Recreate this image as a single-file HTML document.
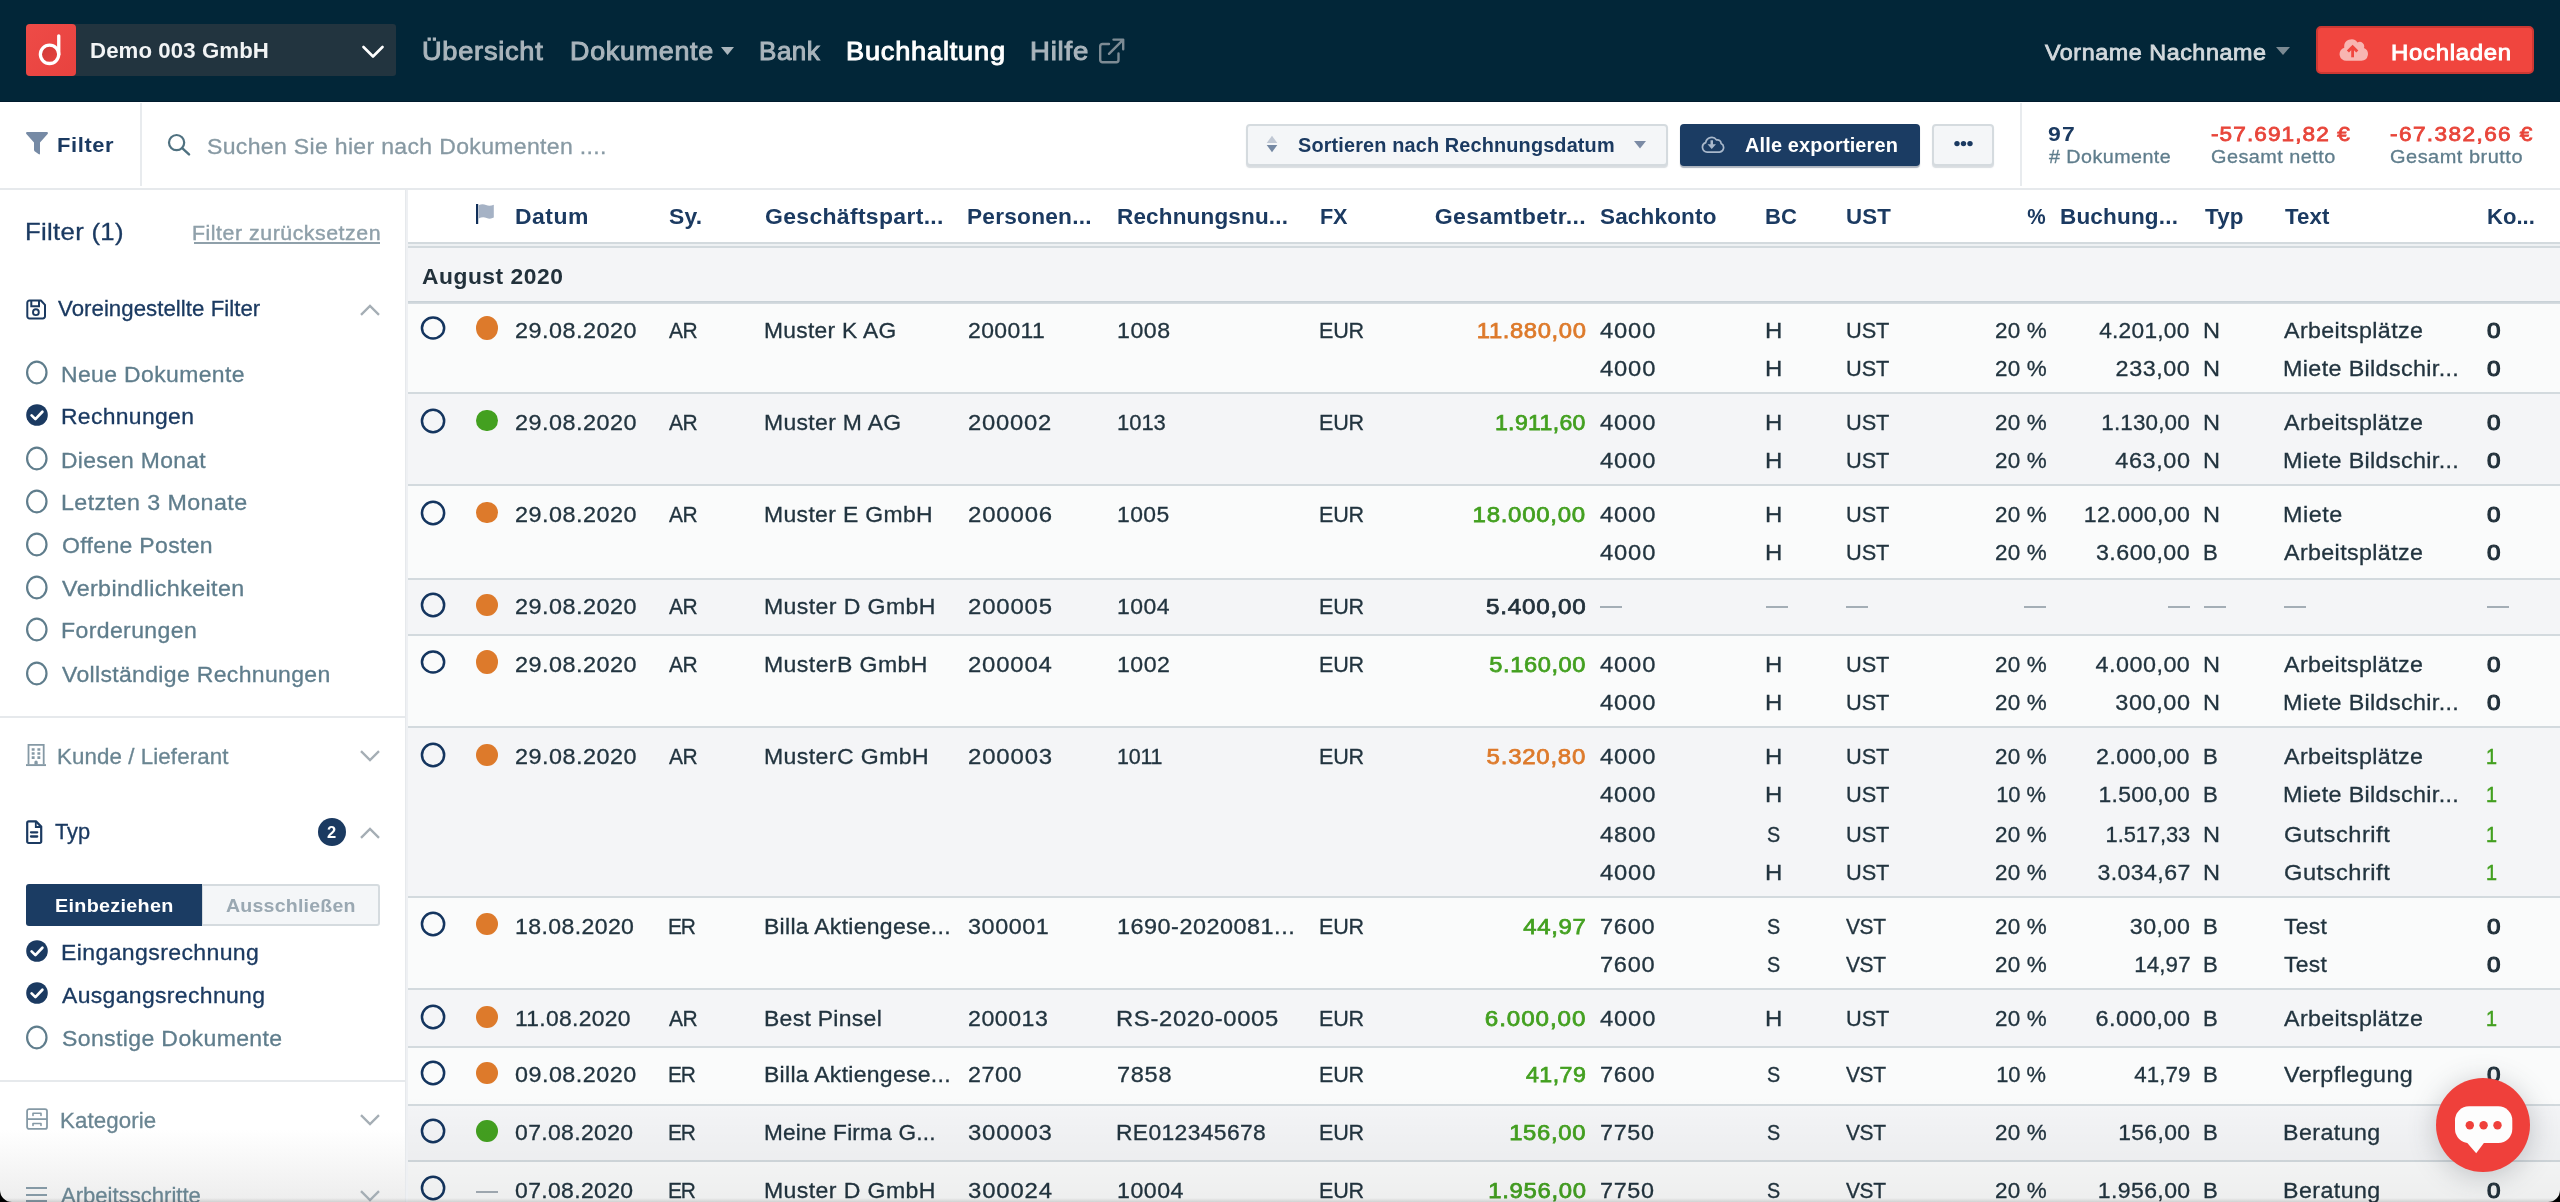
<!DOCTYPE html>
<html lang="de"><head><meta charset="utf-8"><title>Buchhaltung</title><style>
html,body{margin:0;padding:0;background:#fff;overflow:hidden;}
#p{will-change:transform;position:relative;width:2560px;height:1202px;overflow:hidden;background:#fff;font-family:"Liberation Sans",sans-serif;}
.t{position:absolute;white-space:nowrap;line-height:1;font-family:"Liberation Sans",sans-serif;}
.b{position:absolute;box-sizing:border-box;display:block;}
</style></head><body><div id="p">
<div class="b" style="left:0px;top:0px;width:2560px;height:102px;background:#022638;border-bottom:1px solid #011b2e;"></div>
<div class="b" style="left:26px;top:24px;width:370px;height:52px;background:#22343f;border-radius:3px;"></div>
<div class="b" style="left:26px;top:24px;width:50px;height:52px;background:linear-gradient(135deg,#ee4b47,#e8423f);border-radius:4px;"></div>
<svg class="b" style="left:26px;top:24px;" width="50" height="52" viewBox="0 0 50 52"><defs><linearGradient id="lg" x1="0" y1="0" x2="1" y2="1"><stop offset="0" stop-color="#cf3a38"/><stop offset="1" stop-color="#e8433f"/></linearGradient></defs><circle cx="23.55" cy="30.3" r="9.2" fill="url(#lg)" stroke="#fff" stroke-width="3.3"/><path d="M32.75 30.3V11.8" stroke="#fff" stroke-width="3.3" stroke-linecap="round" fill="none"/></svg>
<span class="t" id="t1" style="top:40.28px;font-size:22px;color:#f2f4f5;font-weight:700;letter-spacing:0.094px;left:90.09px;transform:scaleX(1.0098);transform-origin:0 0;">Demo 003 GmbH</span>
<svg class="b" style="left:362px;top:45px;" width="22" height="14" viewBox="0 0 22 14"><path d="M1.5 2L11 11.5L20.5 2" fill="none" stroke="#fff" stroke-width="2.6" stroke-linecap="round" stroke-linejoin="round"/></svg>
<span class="t" id="t2" style="top:39.24px;font-size:25px;color:#aab5bc;letter-spacing:0.688px;-webkit-text-stroke:0.95px #aab5bc;left:422.04px;transform:scaleX(1.0867);transform-origin:0 0;">Übersicht</span>
<span class="t" id="t3" style="top:39.24px;font-size:25px;color:#aab5bc;letter-spacing:0.706px;-webkit-text-stroke:0.95px #aab5bc;left:569.55px;transform:scaleX(1.0729);transform-origin:0 0;">Dokumente</span>
<svg class="b" style="left:721px;top:47px;" width="13" height="8" viewBox="0 0 13 8"><path d="M0 0H13L6.5 8Z" fill="#aab5bc"/></svg>
<span class="t" id="t4" style="top:39.24px;font-size:25px;color:#aab5bc;letter-spacing:0.489px;-webkit-text-stroke:0.95px #aab5bc;left:758.62px;transform:scaleX(1.0416);transform-origin:0 0;">Bank</span>
<span class="t" id="t5" style="top:39.24px;font-size:25px;color:#ffffff;letter-spacing:0.725px;-webkit-text-stroke:0.95px #ffffff;left:846.03px;transform:scaleX(1.0873);transform-origin:0 0;">Buchhaltung</span>
<span class="t" id="t6" style="top:39.24px;font-size:25px;color:#aab5bc;letter-spacing:0.750px;-webkit-text-stroke:0.95px #aab5bc;left:1029.50px;transform:scaleX(1.1000);transform-origin:0 0;">Hilfe</span>
<svg class="b" style="left:1098px;top:38px;" width="27" height="27" viewBox="0 0 27 27"><path d="M20.5 15.5V22a2.2 2.2 0 0 1-2.2 2.2H4.4A2.2 2.2 0 0 1 2.2 22V8.2A2.2 2.2 0 0 1 4.4 6H11" fill="none" stroke="#7d8b94" stroke-width="2.4" stroke-linecap="round"/><path d="M15.5 1.6H25.2V11.3M25 1.8L11 15.8" fill="none" stroke="#7d8b94" stroke-width="2.4" stroke-linecap="round" stroke-linejoin="round"/></svg>
<span class="t" id="t7" style="top:41.78px;font-size:22px;color:#d3d9dd;letter-spacing:0.510px;-webkit-text-stroke:0.8px #d3d9dd;left:2045.20px;transform:scaleX(1.0610);transform-origin:0 0;">Vorname Nachname</span>
<svg class="b" style="left:2276px;top:47px;" width="14" height="8" viewBox="0 0 14 8"><path d="M0 0H14L7 8Z" fill="#7b8a93"/></svg>
<div class="b" style="left:2316px;top:26px;width:218px;height:48px;background:#f0453e;border:2px solid #cd3833;border-radius:5px;"></div>
<svg class="b" style="left:2339px;top:38px;" width="30" height="24" viewBox="0 0 30 24"><path d="M7.5 22.8A6.7 6.7 0 0 1 5.3 9.7A7.3 7.3 0 0 1 18.5 4.4A4.5 4.5 0 0 1 24.9 9.95A6.7 6.7 0 0 1 22.5 22.8Z" fill="#f8b5b1"/><path d="M13.6 19.3V9.6" fill="none" stroke="#f0453e" stroke-width="2.8"/><path d="M8.9 13.5L13.6 8.8L18.3 13.5" fill="none" stroke="#f0453e" stroke-width="3" stroke-linejoin="miter"/></svg>
<span class="t" id="t8" style="top:41.78px;font-size:22px;color:#fff;letter-spacing:0.670px;-webkit-text-stroke:0.9px #fff;left:2390.75px;transform:scaleX(1.0855);transform-origin:0 0;">Hochladen</span>
<div class="b" style="left:0px;top:102px;width:2560px;height:88px;background:#fff;border-bottom:2px solid #e6e9ec;"></div>
<div class="b" style="left:140px;top:103px;width:2px;height:83px;background:#e8ebee;"></div>
<div class="b" style="left:2020px;top:103px;width:2px;height:83px;background:#e8ebee;"></div>
<svg class="b" style="left:26px;top:132px;" width="22" height="23" viewBox="0 0 22 23"><path d="M1.2 0H20.8Q22.6 0.2 21.6 1.9L14 10.6V21.4Q13.9 23 12.5 22.1L8.6 19.2Q8 18.7 8 17.8V10.6L0.4 1.9Q-0.6 0.2 1.2 0Z" fill="#768aa5"/></svg>
<span class="t" id="t9" style="top:135.17px;font-size:20px;color:#1b3a61;font-weight:700;letter-spacing:0.554px;left:57.27px;transform:scaleX(1.0962);transform-origin:0 0;">Filter</span>
<svg class="b" style="left:167px;top:133px;" width="25" height="23" viewBox="0 0 25 23"><circle cx="9.6" cy="9.6" r="7.6" fill="none" stroke="#4f7180" stroke-width="2.2"/><path d="M15.2 15.2L22 21.4" stroke="#4f7180" stroke-width="2.4" stroke-linecap="round"/></svg>
<span class="t" id="t10" style="top:135.58px;font-size:22px;color:#8799a3;letter-spacing:0.313px;-webkit-text-stroke:0.3px #8799a3;left:206.76px;transform:scaleX(1.0468);transform-origin:0 0;">Suchen Sie hier nach Dokumenten ....</span>
<div class="b" style="left:1246px;top:124px;width:422px;height:42px;background:#f4f6f8;border:2px solid #d5dbdf;border-radius:4px;box-shadow:0 2px 1px rgba(170,180,188,.45);"></div>
<svg class="b" style="left:1266px;top:135px;" width="12" height="18" viewBox="0 0 12 18"><path d="M6 0.8L11.3 7.9H0.7Z" fill="#c0c8d4"/><path d="M0.7 9.9H11.3L6 17.3Z" fill="#7488a3"/></svg>
<span class="t" id="t11" style="top:136.39px;font-size:19.5px;color:#1b3a61;font-weight:700;letter-spacing:0.139px;left:1298.19px;transform:scaleX(1.0195);transform-origin:0 0;">Sortieren nach Rechnungsdatum</span>
<svg class="b" style="left:1634px;top:141px;" width="12" height="8" viewBox="0 0 12 8"><path d="M0 0H12L6 7.6Z" fill="#7b8ba5"/></svg>
<div class="b" style="left:1680px;top:124px;width:240px;height:42px;background:#1b3c63;border-radius:4px;box-shadow:0 2px 1px rgba(20,40,70,.35);"></div>
<svg class="b" style="left:1701px;top:134px;" width="25" height="20" viewBox="0 0 25 20"><path d="M6.2 18.1A4.9 4.9 0 0 1 4.7 8.6A6.1 6.1 0 0 1 15.6 5.9A3.7 3.7 0 0 1 20.1 9.6A4.5 4.5 0 0 1 18.6 18.1Z" fill="none" stroke="#a9b8cb" stroke-width="1.7" stroke-linejoin="round"/><path d="M9.5 6.2H12V10.3H15L10.75 15.1L6.5 10.3H9.5Z" fill="#a9b8cb"/></svg>
<span class="t" id="t12" style="top:136.39px;font-size:19.5px;color:#fff;font-weight:700;letter-spacing:0.144px;left:1745.29px;transform:scaleX(1.0227);transform-origin:0 0;">Alle exportieren</span>
<div class="b" style="left:1932px;top:124px;width:62px;height:42px;background:#f4f6f8;border:2px solid #d5dbdf;border-radius:4px;box-shadow:0 2px 1px rgba(170,180,188,.45);"></div>
<svg class="b" style="left:1954px;top:140px;" width="19" height="7" viewBox="0 0 19 7"><circle cx="3" cy="3.6" r="2.7" fill="#1b3a61"/><circle cx="9.5" cy="3.6" r="2.7" fill="#1b3a61"/><circle cx="16" cy="3.6" r="2.7" fill="#1b3a61"/></svg>
<span class="t" id="t13" style="top:123.75px;font-size:20.5px;color:#1b3a61;font-weight:700;letter-spacing:1.031px;left:2047.92px;transform:scaleX(1.1200);transform-origin:0 0;">97</span>
<span class="t" id="t14" style="top:148.04px;font-size:18.5px;color:#5f7d8c;letter-spacing:0.438px;-webkit-text-stroke:0.3px #5f7d8c;left:2048.70px;transform:scaleX(1.0640);transform-origin:0 0;"># Dokumente</span>
<span class="t" id="t15" style="top:123.75px;font-size:20.5px;color:#e8453a;letter-spacing:0.998px;-webkit-text-stroke:0.8px #e8453a;left:2210.71px;transform:scaleX(1.1000);transform-origin:0 0;">-57.691,82 €</span>
<span class="t" id="t16" style="top:148.04px;font-size:18.5px;color:#5f7d8c;letter-spacing:0.446px;-webkit-text-stroke:0.3px #5f7d8c;left:2210.74px;transform:scaleX(1.0720);transform-origin:0 0;">Gesamt netto</span>
<span class="t" id="t17" style="top:123.75px;font-size:20.5px;color:#e8453a;letter-spacing:1.296px;-webkit-text-stroke:0.8px #e8453a;left:2390.21px;transform:scaleX(1.1000);transform-origin:0 0;">-67.382,66 €</span>
<span class="t" id="t18" style="top:148.04px;font-size:18.5px;color:#5f7d8c;letter-spacing:0.469px;-webkit-text-stroke:0.3px #5f7d8c;left:2390.23px;transform:scaleX(1.0787);transform-origin:0 0;">Gesamt brutto</span>
<div class="b" style="left:0px;top:190px;width:405px;height:1012px;background:#fff;"></div>
<div class="b" style="left:405px;top:190px;width:3px;height:1012px;background:linear-gradient(to right,#e6e9ec 0,#e6e9ec 34%,#eef0f3 34%);"></div>
<div class="b" style="left:0px;top:1130px;width:405px;height:72px;background:linear-gradient(to bottom,rgba(240,240,240,0),rgba(237,237,237,1));"></div>
<span class="t" id="t19" style="top:220.16px;font-size:24.5px;color:#1b3a61;letter-spacing:0.304px;-webkit-text-stroke:0.3px #1b3a61;left:24.60px;transform:scaleX(1.0490);transform-origin:0 0;">Filter (1)</span>
<span class="t" id="t20" style="top:224.39px;font-size:19.5px;color:#8fa0aa;letter-spacing:0.501px;-webkit-text-stroke:0.4px #8fa0aa;left:192.45px;transform:scaleX(1.0918);transform-origin:0 0;">Filter zurücksetzen</span>
<div class="b" style="left:193.5px;top:242px;width:186.5px;height:2px;background:#8fa0aa;"></div>
<svg class="b" style="left:26px;top:298.5px;" width="21" height="21" viewBox="0 0 21 21"><path d="M3.5 1.5H14.9L19 5.9V17.2A2.2 2.2 0 0 1 16.8 19.4H3.5A2.2 2.2 0 0 1 1.3 17.2V3.7A2.2 2.2 0 0 1 3.5 1.5Z" fill="none" stroke="#1b3a61" stroke-width="2" stroke-linejoin="round"/><path d="M5.3 1.6V7.2H13V1.6" fill="none" stroke="#1b3a61" stroke-width="2"/><circle cx="9.9" cy="13.2" r="2.9" fill="none" stroke="#1b3a61" stroke-width="1.9"/></svg>
<span class="t" id="t21" style="top:298.28px;font-size:22px;color:#1b3a61;letter-spacing:0.055px;-webkit-text-stroke:0.3px #1b3a61;left:57.70px;transform:scaleX(1.0088);transform-origin:0 0;">Voreingestellte Filter</span>
<svg class="b" style="left:360px;top:303.5px;" width="20" height="12" viewBox="0 0 20 12"><path d="M1 10.9L10 1.9L19 10.9" fill="none" stroke="#a5aeb5" stroke-width="2.3" stroke-linecap="butt" stroke-linejoin="miter"/></svg>
<svg class="b" style="left:26px;top:360px;" width="22" height="25" viewBox="0 0 22 25"><ellipse cx="10.8" cy="12.5" rx="9.7" ry="10.8" fill="none" stroke="#5f7d8c" stroke-width="2.2"/></svg>
<span class="t" id="t22" style="top:364.28px;font-size:22px;color:#5f7d8c;letter-spacing:0.358px;-webkit-text-stroke:0.3px #5f7d8c;left:61.12px;transform:scaleX(1.0432);transform-origin:0 0;">Neue Dokumente</span>
<svg class="b" style="left:26px;top:403.95px;" width="22" height="22" viewBox="0 0 22 22"><circle cx="11" cy="11" r="10.8" fill="#1b3a61"/><path d="M5.6 11.4L9.4 15.1L16.4 7.7" fill="none" stroke="#fff" stroke-width="2.7" stroke-linecap="round" stroke-linejoin="round"/></svg>
<span class="t" id="t23" style="top:406.03px;font-size:22px;color:#1b3a61;letter-spacing:0.341px;-webkit-text-stroke:0.3px #1b3a61;left:61.13px;transform:scaleX(1.0393);transform-origin:0 0;">Rechnungen</span>
<svg class="b" style="left:26px;top:445.5px;" width="22" height="25" viewBox="0 0 22 25"><ellipse cx="10.8" cy="12.5" rx="9.7" ry="10.8" fill="none" stroke="#5f7d8c" stroke-width="2.2"/></svg>
<span class="t" id="t24" style="top:449.78px;font-size:22px;color:#5f7d8c;letter-spacing:0.310px;-webkit-text-stroke:0.3px #5f7d8c;left:61.13px;transform:scaleX(1.0398);transform-origin:0 0;">Diesen Monat</span>
<svg class="b" style="left:26px;top:488.75px;" width="22" height="25" viewBox="0 0 22 25"><ellipse cx="10.8" cy="12.5" rx="9.7" ry="10.8" fill="none" stroke="#5f7d8c" stroke-width="2.2"/></svg>
<span class="t" id="t25" style="top:492.28px;font-size:22px;color:#5f7d8c;letter-spacing:0.402px;-webkit-text-stroke:0.3px #5f7d8c;left:61.10px;transform:scaleX(1.0571);transform-origin:0 0;">Letzten 3 Monate</span>
<svg class="b" style="left:26px;top:531.75px;" width="22" height="25" viewBox="0 0 22 25"><ellipse cx="10.8" cy="12.5" rx="9.7" ry="10.8" fill="none" stroke="#5f7d8c" stroke-width="2.2"/></svg>
<span class="t" id="t26" style="top:534.78px;font-size:22px;color:#5f7d8c;letter-spacing:0.328px;-webkit-text-stroke:0.3px #5f7d8c;left:61.96px;transform:scaleX(1.0447);transform-origin:0 0;">Offene Posten</span>
<svg class="b" style="left:26px;top:575px;" width="22" height="25" viewBox="0 0 22 25"><ellipse cx="10.8" cy="12.5" rx="9.7" ry="10.8" fill="none" stroke="#5f7d8c" stroke-width="2.2"/></svg>
<span class="t" id="t27" style="top:578.28px;font-size:22px;color:#5f7d8c;letter-spacing:0.374px;-webkit-text-stroke:0.3px #5f7d8c;left:62.00px;transform:scaleX(1.0575);transform-origin:0 0;">Verbindlichkeiten</span>
<svg class="b" style="left:26px;top:617px;" width="22" height="25" viewBox="0 0 22 25"><ellipse cx="10.8" cy="12.5" rx="9.7" ry="10.8" fill="none" stroke="#5f7d8c" stroke-width="2.2"/></svg>
<span class="t" id="t28" style="top:620.28px;font-size:22px;color:#5f7d8c;letter-spacing:0.369px;-webkit-text-stroke:0.3px #5f7d8c;left:61.12px;transform:scaleX(1.0472);transform-origin:0 0;">Forderungen</span>
<svg class="b" style="left:26px;top:660.5px;" width="22" height="25" viewBox="0 0 22 25"><ellipse cx="10.8" cy="12.5" rx="9.7" ry="10.8" fill="none" stroke="#5f7d8c" stroke-width="2.2"/></svg>
<span class="t" id="t29" style="top:664.28px;font-size:22px;color:#5f7d8c;letter-spacing:0.324px;-webkit-text-stroke:0.3px #5f7d8c;left:62.00px;transform:scaleX(1.0450);transform-origin:0 0;">Vollständige Rechnungen</span>
<div class="b" style="left:0px;top:716px;width:405px;height:2px;background:#e6e9ec;"></div>
<svg class="b" style="left:26px;top:743px;" width="21" height="24" viewBox="0 0 21 24"><path d="M2.5 21.2V1.9H17.7V21.2" fill="none" stroke="#8599a5" stroke-width="1.8"/><path d="M0 22.1H20" stroke="#8599a5" stroke-width="1.9"/><path d="M7.15 5.2V7.8M12.85 5.2V7.8M7.15 9.2V11.8M12.85 9.2V11.8M7.15 13.2V16M12.85 13.2V16" stroke="#8599a5" stroke-width="2.9"/><path d="M8.4 21.4V19.1A1.65 1.65 0 0 1 11.7 19.1V21.4Z" fill="#8599a5"/></svg>
<span class="t" id="t30" style="top:745.88px;font-size:22px;color:#6a8592;letter-spacing:0.092px;-webkit-text-stroke:0.3px #6a8592;left:56.88px;transform:scaleX(1.0136);transform-origin:0 0;">Kunde / Lieferant</span>
<svg class="b" style="left:360px;top:750px;" width="20" height="12" viewBox="0 0 20 12"><path d="M1 1.1L10 10.1L19 1.1" fill="none" stroke="#a5aeb5" stroke-width="2.3" stroke-linecap="butt" stroke-linejoin="miter"/></svg>
<svg class="b" style="left:26px;top:820px;" width="17" height="25" viewBox="0 0 17 25"><path d="M2.6 1.4H10L15.2 6.6V21.6A1.4 1.4 0 0 1 13.8 23H2.6A1.4 1.4 0 0 1 1.2 21.6V2.8A1.4 1.4 0 0 1 2.6 1.4Z" fill="none" stroke="#1b3a61" stroke-width="2.2" stroke-linejoin="round"/><path d="M9.8 1.6V7H15" fill="none" stroke="#1b3a61" stroke-width="1.8"/><path d="M5 12.3H11.2M5 16.5H11.2" stroke="#1b3a61" stroke-width="2.3" stroke-linecap="round"/></svg>
<span class="t" id="t31" style="top:820.78px;font-size:22px;color:#1b3a61;letter-spacing:-0.049px;-webkit-text-stroke:0.3px #1b3a61;left:54.80px;transform:scaleX(0.9934);transform-origin:0 0;">Typ</span>
<div class="b" style="left:318px;top:818px;width:28px;height:28px;background:#1b3a61;border-radius:50%;"></div>
<span class="t" id="t32" style="top:823.73px;font-size:16.5px;color:#fff;font-weight:700;left:326.90px;">2</span>
<svg class="b" style="left:360px;top:826.5px;" width="20" height="12" viewBox="0 0 20 12"><path d="M1 10.9L10 1.9L19 10.9" fill="none" stroke="#a5aeb5" stroke-width="2.3" stroke-linecap="butt" stroke-linejoin="miter"/></svg>
<div class="b" style="left:26px;top:884px;width:176px;height:42px;background:#1b3c63;border-radius:3px 0 0 3px;"></div>
<div class="b" style="left:202px;top:884px;width:178px;height:42px;background:#f4f6f8;border:2px solid #d5dbdf;border-left-width:1px;border-radius:0 3px 3px 0;"></div>
<span class="t" id="t33" style="top:896.22px;font-size:19px;color:#fff;font-weight:700;letter-spacing:0.283px;left:55.45px;transform:scaleX(1.0406);transform-origin:0 0;">Einbeziehen</span>
<span class="t" id="t34" style="top:896.22px;font-size:19px;color:#9aa8b2;font-weight:700;letter-spacing:0.207px;left:226.29px;transform:scaleX(1.0289);transform-origin:0 0;">Ausschließen</span>
<svg class="b" style="left:26px;top:939.7px;" width="22" height="22" viewBox="0 0 22 22"><circle cx="11" cy="11" r="10.8" fill="#1b3a61"/><path d="M5.6 11.4L9.4 15.1L16.4 7.7" fill="none" stroke="#fff" stroke-width="2.7" stroke-linecap="round" stroke-linejoin="round"/></svg>
<span class="t" id="t35" style="top:941.68px;font-size:22px;color:#1b3a61;letter-spacing:0.363px;-webkit-text-stroke:0.3px #1b3a61;left:61.11px;transform:scaleX(1.0474);transform-origin:0 0;">Eingangsrechnung</span>
<svg class="b" style="left:26px;top:982.2px;" width="22" height="22" viewBox="0 0 22 22"><circle cx="11" cy="11" r="10.8" fill="#1b3a61"/><path d="M5.6 11.4L9.4 15.1L16.4 7.7" fill="none" stroke="#fff" stroke-width="2.7" stroke-linecap="round" stroke-linejoin="round"/></svg>
<span class="t" id="t36" style="top:984.68px;font-size:22px;color:#1b3a61;letter-spacing:0.341px;-webkit-text-stroke:0.3px #1b3a61;left:62.00px;transform:scaleX(1.0425);transform-origin:0 0;">Ausgangsrechnung</span>
<svg class="b" style="left:26px;top:1025px;" width="22" height="25" viewBox="0 0 22 25"><ellipse cx="10.8" cy="12.5" rx="9.7" ry="10.8" fill="none" stroke="#5f7d8c" stroke-width="2.2"/></svg>
<span class="t" id="t37" style="top:1028.03px;font-size:22px;color:#5f7d8c;letter-spacing:0.355px;-webkit-text-stroke:0.3px #5f7d8c;left:62.06px;transform:scaleX(1.0469);transform-origin:0 0;">Sonstige Dokumente</span>
<div class="b" style="left:0px;top:1080px;width:405px;height:2px;background:#e6e9ec;"></div>
<svg class="b" style="left:26px;top:1108px;" width="23" height="23" viewBox="0 0 23 23"><rect x="1.1" y="1.1" width="19.9" height="19.8" rx="2" fill="none" stroke="#8599a5" stroke-width="1.8"/><path d="M1.1 11.1H21" stroke="#8599a5" stroke-width="1.8"/><path d="M7 7.4V5.3H15V7.4M7 17.5V15.5H15V17.5" fill="none" stroke="#8599a5" stroke-width="1.6" stroke-linecap="round" stroke-linejoin="round"/></svg>
<span class="t" id="t38" style="top:1110.28px;font-size:22px;color:#6a8592;letter-spacing:0.092px;-webkit-text-stroke:0.3px #6a8592;left:60.48px;transform:scaleX(1.0122);transform-origin:0 0;">Kategorie</span>
<svg class="b" style="left:360px;top:1113.5px;" width="20" height="12" viewBox="0 0 20 12"><path d="M1 1.1L10 10.1L19 1.1" fill="none" stroke="#a5aeb5" stroke-width="2.3" stroke-linecap="butt" stroke-linejoin="miter"/></svg>
<div class="b" style="left:26px;top:1187px;width:21px;height:2px;background:#8599a5;"></div>
<div class="b" style="left:26px;top:1193.5px;width:21px;height:2px;background:#8599a5;"></div>
<div class="b" style="left:26px;top:1199.5px;width:21px;height:2px;background:#8599a5;"></div>
<span class="t" id="t39" style="top:1185.28px;font-size:22px;color:#6a8592;letter-spacing:0.013px;-webkit-text-stroke:0.3px #6a8592;left:61.30px;transform:scaleX(1.0020);transform-origin:0 0;">Arbeitsschritte</span>
<svg class="b" style="left:360px;top:1190px;" width="20" height="12" viewBox="0 0 20 12"><path d="M1 1.1L10 10.1L19 1.1" fill="none" stroke="#a5aeb5" stroke-width="2.3" stroke-linecap="butt" stroke-linejoin="miter"/></svg>
<div class="b" style="left:408px;top:190px;width:2152px;height:52px;background:#fff;"></div>
<div class="b" style="left:408px;top:242px;width:2152px;height:2px;background:#d3dade;"></div>
<div class="b" style="left:408px;top:244px;width:2152px;height:2px;background:#eef1f3;"></div>
<div class="b" style="left:408px;top:246px;width:2152px;height:2px;background:#d3dade;"></div>
<div class="b" style="left:408px;top:248px;width:2152px;height:53px;background:#f4f5f7;"></div>
<div class="b" style="left:408px;top:301px;width:2152px;height:3px;background:linear-gradient(to bottom,#c6cfd5,#d8dee2);"></div>
<span class="t" id="t40" style="top:267.10px;font-size:21.5px;color:#22313b;font-weight:700;letter-spacing:0.487px;left:422.17px;transform:scaleX(1.0612);transform-origin:0 0;">August 2020</span>
<svg class="b" style="left:475px;top:203px;" width="20" height="22" viewBox="0 0 20 22"><path d="M2.1 1V21" stroke="#102f59" stroke-width="2.2" stroke-linecap="butt"/><path d="M3.6 2.2Q7.4 0.5 11 2T18.8 1.7V14.6Q15.2 16.6 11.6 15T3.6 15.4Z" fill="#a5b2c5"/></svg>
<span class="t" id="t41" style="top:205.88px;font-size:22px;color:#1b3a61;font-weight:700;letter-spacing:0.452px;left:514.74px;transform:scaleX(1.0430);transform-origin:0 0;">Datum</span>
<span class="t" id="t42" style="top:205.88px;font-size:22px;color:#1b3a61;font-weight:700;letter-spacing:0.234px;left:668.83px;transform:scaleX(1.0388);transform-origin:0 0;">Sy.</span>
<span class="t" id="t43" style="top:205.88px;font-size:22px;color:#1b3a61;font-weight:700;letter-spacing:0.307px;left:764.76px;transform:scaleX(1.0441);transform-origin:0 0;">Geschäftspart...</span>
<span class="t" id="t44" style="top:205.88px;font-size:22px;color:#1b3a61;font-weight:700;letter-spacing:0.226px;left:967.26px;transform:scaleX(1.0302);transform-origin:0 0;">Personen...</span>
<span class="t" id="t45" style="top:205.88px;font-size:22px;color:#1b3a61;font-weight:700;letter-spacing:0.175px;left:1116.87px;transform:scaleX(1.0215);transform-origin:0 0;">Rechnungsnu...</span>
<span class="t" id="t46" style="top:205.88px;font-size:22px;color:#1b3a61;font-weight:700;letter-spacing:-0.195px;left:1319.82px;transform:scaleX(0.9832);transform-origin:0 0;">FX</span>
<span class="t" id="t47" style="top:205.88px;font-size:22px;color:#1b3a61;font-weight:700;letter-spacing:0.366px;right:973.53px;transform:scaleX(1.0505);transform-origin:100% 0;">Gesamtbetr...</span>
<span class="t" id="t48" style="top:205.88px;font-size:22px;color:#1b3a61;font-weight:700;letter-spacing:0.190px;left:1600.09px;transform:scaleX(1.0210);transform-origin:0 0;">Sachkonto</span>
<span class="t" id="t49" style="top:205.88px;font-size:22px;color:#1b3a61;font-weight:700;letter-spacing:0.034px;left:1765.40px;transform:scaleX(1.0026);transform-origin:0 0;">BC</span>
<span class="t" id="t50" style="top:205.88px;font-size:22px;color:#1b3a61;font-weight:700;letter-spacing:0.109px;left:1845.68px;transform:scaleX(1.0121);transform-origin:0 0;">UST</span>
<span class="t" id="t51" style="top:205.88px;font-size:22px;color:#1b3a61;font-weight:700;right:513.97px;transform:scaleX(0.9405);transform-origin:100% 0;">%</span>
<span class="t" id="t52" style="top:205.88px;font-size:22px;color:#1b3a61;font-weight:700;letter-spacing:0.181px;left:2060.27px;transform:scaleX(1.0225);transform-origin:0 0;">Buchung...</span>
<span class="t" id="t53" style="top:205.88px;font-size:22px;color:#1b3a61;font-weight:700;letter-spacing:0.141px;left:2205.00px;transform:scaleX(1.0184);transform-origin:0 0;">Typ</span>
<span class="t" id="t54" style="top:205.88px;font-size:22px;color:#1b3a61;font-weight:700;letter-spacing:0.096px;left:2285.00px;transform:scaleX(1.0101);transform-origin:0 0;">Text</span>
<span class="t" id="t55" style="top:205.88px;font-size:22px;color:#1b3a61;font-weight:700;letter-spacing:0.015px;left:2487.30px;transform:scaleX(1.0020);transform-origin:0 0;">Ko...</span>
<div class="b" style="left:408px;top:304px;width:2152px;height:88px;background:#fafbfb;"></div>
<div class="b" style="left:408px;top:392px;width:2152px;height:2px;background:#d3dade;"></div>
<svg class="b" style="left:420px;top:315px;" width="26" height="26" viewBox="0 0 26 26"><ellipse cx="13.05" cy="13" rx="11.1" ry="10.5" fill="none" stroke="#14355f" stroke-width="2.5"/></svg>
<div class="b" style="left:476.3px;top:316px;width:21.6px;height:24px;border-radius:50%;background:#dd7a2b;"></div>
<span class="t" id="t56" style="top:320.28px;font-size:22px;color:#22343f;letter-spacing:0.470px;-webkit-text-stroke:0.3px #22343f;left:515.03px;transform:scaleX(1.0623);transform-origin:0 0;">29.08.2020</span>
<span class="t" id="t57" style="top:320.28px;font-size:22px;color:#22343f;letter-spacing:-0.605px;-webkit-text-stroke:0.3px #22343f;left:669.45px;transform:scaleX(0.9545);transform-origin:0 0;">AR</span>
<span class="t" id="t58" style="top:320.28px;font-size:22px;color:#22343f;letter-spacing:0.285px;-webkit-text-stroke:0.3px #22343f;left:763.83px;transform:scaleX(1.0362);transform-origin:0 0;">Muster K AG</span>
<span class="t" id="t59" style="top:320.28px;font-size:22px;color:#22343f;letter-spacing:0.380px;-webkit-text-stroke:0.3px #22343f;left:967.55px;transform:scaleX(1.0427);transform-origin:0 0;">200011</span>
<span class="t" id="t60" style="top:320.28px;font-size:22px;color:#22343f;letter-spacing:0.518px;-webkit-text-stroke:0.3px #22343f;left:1116.62px;transform:scaleX(1.0529);transform-origin:0 0;">1008</span>
<span class="t" id="t61" style="top:320.28px;font-size:22px;color:#22343f;letter-spacing:-0.193px;-webkit-text-stroke:0.3px #22343f;left:1319.44px;transform:scaleX(0.9798);transform-origin:0 0;">EUR</span>
<span class="t" id="t62" style="top:320.28px;font-size:22px;color:#dd7a2b;letter-spacing:0.583px;-webkit-text-stroke:0.75px #dd7a2b;right:973.96px;transform:scaleX(1.0806);transform-origin:100% 0;">11.880,00</span>
<span class="t" id="t63" style="top:320.28px;font-size:22px;color:#22343f;letter-spacing:0.778px;-webkit-text-stroke:0.3px #22343f;left:1600.16px;transform:scaleX(1.0793);transform-origin:0 0;">4000</span>
<span class="t" id="t64" style="top:320.28px;font-size:22px;color:#22343f;-webkit-text-stroke:0.3px #22343f;left:1765.49px;transform:scaleX(1.0894);transform-origin:0 0;">H</span>
<span class="t" id="t65" style="top:320.28px;font-size:22px;color:#22343f;letter-spacing:-0.085px;-webkit-text-stroke:0.3px #22343f;left:1845.87px;transform:scaleX(0.9906);transform-origin:0 0;">UST</span>
<span class="t" id="t66" style="top:320.28px;font-size:22px;color:#22343f;letter-spacing:0.211px;-webkit-text-stroke:0.3px #22343f;right:513.51px;transform:scaleX(1.0201);transform-origin:100% 0;">20 %</span>
<span class="t" id="t67" style="top:320.28px;font-size:22px;color:#22343f;letter-spacing:0.254px;-webkit-text-stroke:0.3px #22343f;right:369.87px;transform:scaleX(1.0327);transform-origin:100% 0;">4.201,00</span>
<span class="t" id="t68" style="top:320.28px;font-size:22px;color:#22343f;-webkit-text-stroke:0.3px #22343f;left:2203.28px;transform:scaleX(1.0691);transform-origin:0 0;">N</span>
<span class="t" id="t69" style="top:320.28px;font-size:22px;color:#22343f;letter-spacing:0.368px;-webkit-text-stroke:0.3px #22343f;left:2284.20px;transform:scaleX(1.0554);transform-origin:0 0;">Arbeitsplätze</span>
<span class="t" id="t70" style="top:320.28px;font-size:22px;color:#22313b;-webkit-text-stroke:1.1px #22313b;left:2487.32px;transform:scaleX(1.1038);transform-origin:0 0;">0</span>
<span class="t" id="t71" style="top:358.03px;font-size:22px;color:#22343f;letter-spacing:0.778px;-webkit-text-stroke:0.3px #22343f;left:1600.16px;transform:scaleX(1.0793);transform-origin:0 0;">4000</span>
<span class="t" id="t72" style="top:358.03px;font-size:22px;color:#22343f;-webkit-text-stroke:0.3px #22343f;left:1765.49px;transform:scaleX(1.0894);transform-origin:0 0;">H</span>
<span class="t" id="t73" style="top:358.03px;font-size:22px;color:#22343f;letter-spacing:-0.085px;-webkit-text-stroke:0.3px #22343f;left:1845.87px;transform:scaleX(0.9906);transform-origin:0 0;">UST</span>
<span class="t" id="t74" style="top:358.03px;font-size:22px;color:#22343f;letter-spacing:0.211px;-webkit-text-stroke:0.3px #22343f;right:513.51px;transform:scaleX(1.0201);transform-origin:100% 0;">20 %</span>
<span class="t" id="t75" style="top:358.03px;font-size:22px;color:#22343f;letter-spacing:0.512px;-webkit-text-stroke:0.3px #22343f;right:369.56px;transform:scaleX(1.0624);transform-origin:100% 0;">233,00</span>
<span class="t" id="t76" style="top:358.03px;font-size:22px;color:#22343f;-webkit-text-stroke:0.3px #22343f;left:2203.28px;transform:scaleX(1.0691);transform-origin:0 0;">N</span>
<span class="t" id="t77" style="top:358.03px;font-size:22px;color:#22343f;letter-spacing:0.343px;-webkit-text-stroke:0.3px #22343f;left:2283.29px;transform:scaleX(1.0592);transform-origin:0 0;">Miete Bildschir...</span>
<span class="t" id="t78" style="top:358.03px;font-size:22px;color:#22313b;-webkit-text-stroke:1.1px #22313b;left:2487.32px;transform:scaleX(1.1038);transform-origin:0 0;">0</span>
<div class="b" style="left:408px;top:394px;width:2152px;height:90px;background:#f4f5f7;"></div>
<div class="b" style="left:408px;top:484px;width:2152px;height:2px;background:#d3dade;"></div>
<svg class="b" style="left:420px;top:407.5px;" width="26" height="26" viewBox="0 0 26 26"><ellipse cx="13.05" cy="13" rx="11.1" ry="11.15" fill="none" stroke="#14355f" stroke-width="2.5"/></svg>
<div class="b" style="left:476.3px;top:409.6px;width:21.6px;height:21.8px;border-radius:50%;background:#43a020;"></div>
<span class="t" id="t79" style="top:412.28px;font-size:22px;color:#22343f;letter-spacing:0.470px;-webkit-text-stroke:0.3px #22343f;left:515.03px;transform:scaleX(1.0623);transform-origin:0 0;">29.08.2020</span>
<span class="t" id="t80" style="top:412.28px;font-size:22px;color:#22343f;letter-spacing:-0.605px;-webkit-text-stroke:0.3px #22343f;left:669.45px;transform:scaleX(0.9545);transform-origin:0 0;">AR</span>
<span class="t" id="t81" style="top:412.28px;font-size:22px;color:#22343f;letter-spacing:0.336px;-webkit-text-stroke:0.3px #22343f;left:763.83px;transform:scaleX(1.0416);transform-origin:0 0;">Muster M AG</span>
<span class="t" id="t82" style="top:412.28px;font-size:22px;color:#22343f;letter-spacing:0.712px;-webkit-text-stroke:0.3px #22343f;left:967.51px;transform:scaleX(1.0810);transform-origin:0 0;">200002</span>
<span class="t" id="t83" style="top:412.28px;font-size:22px;color:#22343f;letter-spacing:-0.014px;-webkit-text-stroke:0.3px #22343f;left:1116.70px;transform:scaleX(0.9986);transform-origin:0 0;">1013</span>
<span class="t" id="t84" style="top:412.28px;font-size:22px;color:#22343f;letter-spacing:-0.193px;-webkit-text-stroke:0.3px #22343f;left:1319.44px;transform:scaleX(0.9798);transform-origin:0 0;">EUR</span>
<span class="t" id="t85" style="top:412.28px;font-size:22px;color:#43a020;letter-spacing:0.346px;-webkit-text-stroke:0.75px #43a020;right:974.26px;transform:scaleX(1.0466);transform-origin:100% 0;">1.911,60</span>
<span class="t" id="t86" style="top:412.28px;font-size:22px;color:#22343f;letter-spacing:0.778px;-webkit-text-stroke:0.3px #22343f;left:1600.16px;transform:scaleX(1.0793);transform-origin:0 0;">4000</span>
<span class="t" id="t87" style="top:412.28px;font-size:22px;color:#22343f;-webkit-text-stroke:0.3px #22343f;left:1765.49px;transform:scaleX(1.0894);transform-origin:0 0;">H</span>
<span class="t" id="t88" style="top:412.28px;font-size:22px;color:#22343f;letter-spacing:-0.085px;-webkit-text-stroke:0.3px #22343f;left:1845.87px;transform:scaleX(0.9906);transform-origin:0 0;">UST</span>
<span class="t" id="t89" style="top:412.28px;font-size:22px;color:#22343f;letter-spacing:0.211px;-webkit-text-stroke:0.3px #22343f;right:513.51px;transform:scaleX(1.0201);transform-origin:100% 0;">20 %</span>
<span class="t" id="t90" style="top:412.28px;font-size:22px;color:#22343f;letter-spacing:0.151px;-webkit-text-stroke:0.3px #22343f;right:369.99px;transform:scaleX(1.0195);transform-origin:100% 0;">1.130,00</span>
<span class="t" id="t91" style="top:412.28px;font-size:22px;color:#22343f;-webkit-text-stroke:0.3px #22343f;left:2203.28px;transform:scaleX(1.0691);transform-origin:0 0;">N</span>
<span class="t" id="t92" style="top:412.28px;font-size:22px;color:#22343f;letter-spacing:0.368px;-webkit-text-stroke:0.3px #22343f;left:2284.20px;transform:scaleX(1.0554);transform-origin:0 0;">Arbeitsplätze</span>
<span class="t" id="t93" style="top:412.28px;font-size:22px;color:#22313b;-webkit-text-stroke:1.1px #22313b;left:2487.32px;transform:scaleX(1.1038);transform-origin:0 0;">0</span>
<span class="t" id="t94" style="top:449.78px;font-size:22px;color:#22343f;letter-spacing:0.778px;-webkit-text-stroke:0.3px #22343f;left:1600.16px;transform:scaleX(1.0793);transform-origin:0 0;">4000</span>
<span class="t" id="t95" style="top:449.78px;font-size:22px;color:#22343f;-webkit-text-stroke:0.3px #22343f;left:1765.49px;transform:scaleX(1.0894);transform-origin:0 0;">H</span>
<span class="t" id="t96" style="top:449.78px;font-size:22px;color:#22343f;letter-spacing:-0.085px;-webkit-text-stroke:0.3px #22343f;left:1845.87px;transform:scaleX(0.9906);transform-origin:0 0;">UST</span>
<span class="t" id="t97" style="top:449.78px;font-size:22px;color:#22343f;letter-spacing:0.211px;-webkit-text-stroke:0.3px #22343f;right:513.51px;transform:scaleX(1.0201);transform-origin:100% 0;">20 %</span>
<span class="t" id="t98" style="top:449.78px;font-size:22px;color:#22343f;letter-spacing:0.558px;-webkit-text-stroke:0.3px #22343f;right:369.51px;transform:scaleX(1.0677);transform-origin:100% 0;">463,00</span>
<span class="t" id="t99" style="top:449.78px;font-size:22px;color:#22343f;-webkit-text-stroke:0.3px #22343f;left:2203.28px;transform:scaleX(1.0691);transform-origin:0 0;">N</span>
<span class="t" id="t100" style="top:449.78px;font-size:22px;color:#22343f;letter-spacing:0.343px;-webkit-text-stroke:0.3px #22343f;left:2283.29px;transform:scaleX(1.0592);transform-origin:0 0;">Miete Bildschir...</span>
<span class="t" id="t101" style="top:449.78px;font-size:22px;color:#22313b;-webkit-text-stroke:1.1px #22313b;left:2487.32px;transform:scaleX(1.1038);transform-origin:0 0;">0</span>
<div class="b" style="left:408px;top:486px;width:2152px;height:92px;background:#fafbfb;"></div>
<div class="b" style="left:408px;top:578px;width:2152px;height:2px;background:#d3dade;"></div>
<svg class="b" style="left:420px;top:499.5px;" width="26" height="26" viewBox="0 0 26 26"><ellipse cx="13.05" cy="13" rx="11.1" ry="11.15" fill="none" stroke="#14355f" stroke-width="2.5"/></svg>
<div class="b" style="left:476.3px;top:501.6px;width:21.6px;height:21.8px;border-radius:50%;background:#dd7a2b;"></div>
<span class="t" id="t102" style="top:504.28px;font-size:22px;color:#22343f;letter-spacing:0.470px;-webkit-text-stroke:0.3px #22343f;left:515.03px;transform:scaleX(1.0623);transform-origin:0 0;">29.08.2020</span>
<span class="t" id="t103" style="top:504.28px;font-size:22px;color:#22343f;letter-spacing:-0.605px;-webkit-text-stroke:0.3px #22343f;left:669.45px;transform:scaleX(0.9545);transform-origin:0 0;">AR</span>
<span class="t" id="t104" style="top:504.28px;font-size:22px;color:#22343f;letter-spacing:0.345px;-webkit-text-stroke:0.3px #22343f;left:763.82px;transform:scaleX(1.0420);transform-origin:0 0;">Muster E GmbH</span>
<span class="t" id="t105" style="top:504.28px;font-size:22px;color:#22343f;letter-spacing:0.773px;-webkit-text-stroke:0.3px #22343f;left:967.50px;transform:scaleX(1.0885);transform-origin:0 0;">200006</span>
<span class="t" id="t106" style="top:504.28px;font-size:22px;color:#22343f;letter-spacing:0.409px;-webkit-text-stroke:0.3px #22343f;left:1116.63px;transform:scaleX(1.0412);transform-origin:0 0;">1005</span>
<span class="t" id="t107" style="top:504.28px;font-size:22px;color:#22343f;letter-spacing:-0.193px;-webkit-text-stroke:0.3px #22343f;left:1319.44px;transform:scaleX(0.9798);transform-origin:0 0;">EUR</span>
<span class="t" id="t108" style="top:504.28px;font-size:22px;color:#43a020;letter-spacing:0.663px;-webkit-text-stroke:0.75px #43a020;right:973.86px;transform:scaleX(1.0909);transform-origin:100% 0;">18.000,00</span>
<span class="t" id="t109" style="top:504.28px;font-size:22px;color:#22343f;letter-spacing:0.778px;-webkit-text-stroke:0.3px #22343f;left:1600.16px;transform:scaleX(1.0793);transform-origin:0 0;">4000</span>
<span class="t" id="t110" style="top:504.28px;font-size:22px;color:#22343f;-webkit-text-stroke:0.3px #22343f;left:1765.49px;transform:scaleX(1.0894);transform-origin:0 0;">H</span>
<span class="t" id="t111" style="top:504.28px;font-size:22px;color:#22343f;letter-spacing:-0.085px;-webkit-text-stroke:0.3px #22343f;left:1845.87px;transform:scaleX(0.9906);transform-origin:0 0;">UST</span>
<span class="t" id="t112" style="top:504.28px;font-size:22px;color:#22343f;letter-spacing:0.211px;-webkit-text-stroke:0.3px #22343f;right:513.51px;transform:scaleX(1.0201);transform-origin:100% 0;">20 %</span>
<span class="t" id="t113" style="top:504.28px;font-size:22px;color:#22343f;letter-spacing:0.393px;-webkit-text-stroke:0.3px #22343f;right:369.70px;transform:scaleX(1.0520);transform-origin:100% 0;">12.000,00</span>
<span class="t" id="t114" style="top:504.28px;font-size:22px;color:#22343f;-webkit-text-stroke:0.3px #22343f;left:2203.28px;transform:scaleX(1.0691);transform-origin:0 0;">N</span>
<span class="t" id="t115" style="top:504.28px;font-size:22px;color:#22343f;letter-spacing:0.502px;-webkit-text-stroke:0.3px #22343f;left:2283.29px;transform:scaleX(1.0627);transform-origin:0 0;">Miete</span>
<span class="t" id="t116" style="top:504.28px;font-size:22px;color:#22313b;-webkit-text-stroke:1.1px #22313b;left:2487.32px;transform:scaleX(1.1038);transform-origin:0 0;">0</span>
<span class="t" id="t117" style="top:541.78px;font-size:22px;color:#22343f;letter-spacing:0.778px;-webkit-text-stroke:0.3px #22343f;left:1600.16px;transform:scaleX(1.0793);transform-origin:0 0;">4000</span>
<span class="t" id="t118" style="top:541.78px;font-size:22px;color:#22343f;-webkit-text-stroke:0.3px #22343f;left:1765.49px;transform:scaleX(1.0894);transform-origin:0 0;">H</span>
<span class="t" id="t119" style="top:541.78px;font-size:22px;color:#22343f;letter-spacing:-0.085px;-webkit-text-stroke:0.3px #22343f;left:1845.87px;transform:scaleX(0.9906);transform-origin:0 0;">UST</span>
<span class="t" id="t120" style="top:541.78px;font-size:22px;color:#22343f;letter-spacing:0.211px;-webkit-text-stroke:0.3px #22343f;right:513.51px;transform:scaleX(1.0201);transform-origin:100% 0;">20 %</span>
<span class="t" id="t121" style="top:541.78px;font-size:22px;color:#22343f;letter-spacing:0.427px;-webkit-text-stroke:0.3px #22343f;right:369.66px;transform:scaleX(1.0564);transform-origin:100% 0;">3.600,00</span>
<span class="t" id="t122" style="top:541.78px;font-size:22px;color:#22343f;-webkit-text-stroke:0.3px #22343f;left:2203.38px;transform:scaleX(1.0085);transform-origin:0 0;">B</span>
<span class="t" id="t123" style="top:541.78px;font-size:22px;color:#22343f;letter-spacing:0.368px;-webkit-text-stroke:0.3px #22343f;left:2284.20px;transform:scaleX(1.0554);transform-origin:0 0;">Arbeitsplätze</span>
<span class="t" id="t124" style="top:541.78px;font-size:22px;color:#22313b;-webkit-text-stroke:1.1px #22313b;left:2487.32px;transform:scaleX(1.1038);transform-origin:0 0;">0</span>
<div class="b" style="left:408px;top:580px;width:2152px;height:54px;background:#f4f5f7;"></div>
<div class="b" style="left:408px;top:634px;width:2152px;height:2px;background:#d3dade;"></div>
<svg class="b" style="left:420px;top:592px;" width="26" height="26" viewBox="0 0 26 26"><ellipse cx="13.05" cy="13" rx="11.1" ry="11.15" fill="none" stroke="#14355f" stroke-width="2.5"/></svg>
<div class="b" style="left:476.3px;top:594.1px;width:21.6px;height:21.8px;border-radius:50%;background:#dd7a2b;"></div>
<span class="t" id="t125" style="top:596.03px;font-size:22px;color:#22343f;letter-spacing:0.470px;-webkit-text-stroke:0.3px #22343f;left:515.03px;transform:scaleX(1.0623);transform-origin:0 0;">29.08.2020</span>
<span class="t" id="t126" style="top:596.03px;font-size:22px;color:#22343f;letter-spacing:-0.605px;-webkit-text-stroke:0.3px #22343f;left:669.45px;transform:scaleX(0.9545);transform-origin:0 0;">AR</span>
<span class="t" id="t127" style="top:596.03px;font-size:22px;color:#22343f;letter-spacing:0.392px;-webkit-text-stroke:0.3px #22343f;left:763.81px;transform:scaleX(1.0476);transform-origin:0 0;">Muster D GmbH</span>
<span class="t" id="t128" style="top:596.03px;font-size:22px;color:#22343f;letter-spacing:0.767px;-webkit-text-stroke:0.3px #22343f;left:967.50px;transform:scaleX(1.0875);transform-origin:0 0;">200005</span>
<span class="t" id="t129" style="top:596.03px;font-size:22px;color:#22343f;letter-spacing:0.446px;-webkit-text-stroke:0.3px #22343f;left:1116.63px;transform:scaleX(1.0449);transform-origin:0 0;">1004</span>
<span class="t" id="t130" style="top:596.03px;font-size:22px;color:#22343f;letter-spacing:-0.193px;-webkit-text-stroke:0.3px #22343f;left:1319.44px;transform:scaleX(0.9798);transform-origin:0 0;">EUR</span>
<span class="t" id="t131" style="top:596.03px;font-size:22px;color:#22313b;letter-spacing:0.722px;-webkit-text-stroke:0.75px #22313b;right:973.78px;transform:scaleX(1.0993);transform-origin:100% 0;">5.400,00</span>
<div class="b" style="left:1600px;top:605.75px;width:22px;height:2px;background:#a4aeb6;"></div>
<div class="b" style="left:1766px;top:605.75px;width:22px;height:2px;background:#a4aeb6;"></div>
<div class="b" style="left:1846px;top:605.75px;width:22px;height:2px;background:#a4aeb6;"></div>
<div class="b" style="left:2024px;top:605.75px;width:22px;height:2px;background:#a4aeb6;"></div>
<div class="b" style="left:2167.5px;top:605.75px;width:22px;height:2px;background:#a4aeb6;"></div>
<div class="b" style="left:2204px;top:605.75px;width:22px;height:2px;background:#a4aeb6;"></div>
<div class="b" style="left:2284px;top:605.75px;width:22px;height:2px;background:#a4aeb6;"></div>
<div class="b" style="left:2487px;top:605.75px;width:22px;height:2px;background:#a4aeb6;"></div>
<div class="b" style="left:408px;top:636px;width:2152px;height:90px;background:#fafbfb;"></div>
<div class="b" style="left:408px;top:726px;width:2152px;height:2px;background:#d3dade;"></div>
<svg class="b" style="left:420px;top:649px;" width="26" height="26" viewBox="0 0 26 26"><ellipse cx="13.05" cy="13" rx="11.1" ry="10.5" fill="none" stroke="#14355f" stroke-width="2.5"/></svg>
<div class="b" style="left:476.3px;top:650px;width:21.6px;height:24px;border-radius:50%;background:#dd7a2b;"></div>
<span class="t" id="t132" style="top:654.03px;font-size:22px;color:#22343f;letter-spacing:0.470px;-webkit-text-stroke:0.3px #22343f;left:515.03px;transform:scaleX(1.0623);transform-origin:0 0;">29.08.2020</span>
<span class="t" id="t133" style="top:654.03px;font-size:22px;color:#22343f;letter-spacing:-0.605px;-webkit-text-stroke:0.3px #22343f;left:669.45px;transform:scaleX(0.9545);transform-origin:0 0;">AR</span>
<span class="t" id="t134" style="top:654.03px;font-size:22px;color:#22343f;letter-spacing:0.405px;-webkit-text-stroke:0.3px #22343f;left:763.81px;transform:scaleX(1.0473);transform-origin:0 0;">MusterB GmbH</span>
<span class="t" id="t135" style="top:654.03px;font-size:22px;color:#22343f;letter-spacing:0.753px;-webkit-text-stroke:0.3px #22343f;left:967.51px;transform:scaleX(1.0856);transform-origin:0 0;">200004</span>
<span class="t" id="t136" style="top:654.03px;font-size:22px;color:#22343f;letter-spacing:0.494px;-webkit-text-stroke:0.3px #22343f;left:1116.62px;transform:scaleX(1.0505);transform-origin:0 0;">1002</span>
<span class="t" id="t137" style="top:654.03px;font-size:22px;color:#22343f;letter-spacing:-0.193px;-webkit-text-stroke:0.3px #22343f;left:1319.44px;transform:scaleX(0.9798);transform-origin:0 0;">EUR</span>
<span class="t" id="t138" style="top:654.03px;font-size:22px;color:#43a020;letter-spacing:0.553px;-webkit-text-stroke:0.75px #43a020;right:974.00px;transform:scaleX(1.0743);transform-origin:100% 0;">5.160,00</span>
<span class="t" id="t139" style="top:654.03px;font-size:22px;color:#22343f;letter-spacing:0.778px;-webkit-text-stroke:0.3px #22343f;left:1600.16px;transform:scaleX(1.0793);transform-origin:0 0;">4000</span>
<span class="t" id="t140" style="top:654.03px;font-size:22px;color:#22343f;-webkit-text-stroke:0.3px #22343f;left:1765.49px;transform:scaleX(1.0894);transform-origin:0 0;">H</span>
<span class="t" id="t141" style="top:654.03px;font-size:22px;color:#22343f;letter-spacing:-0.085px;-webkit-text-stroke:0.3px #22343f;left:1845.87px;transform:scaleX(0.9906);transform-origin:0 0;">UST</span>
<span class="t" id="t142" style="top:654.03px;font-size:22px;color:#22343f;letter-spacing:0.211px;-webkit-text-stroke:0.3px #22343f;right:513.51px;transform:scaleX(1.0201);transform-origin:100% 0;">20 %</span>
<span class="t" id="t143" style="top:654.03px;font-size:22px;color:#22343f;letter-spacing:0.463px;-webkit-text-stroke:0.3px #22343f;right:369.62px;transform:scaleX(1.0612);transform-origin:100% 0;">4.000,00</span>
<span class="t" id="t144" style="top:654.03px;font-size:22px;color:#22343f;-webkit-text-stroke:0.3px #22343f;left:2203.28px;transform:scaleX(1.0691);transform-origin:0 0;">N</span>
<span class="t" id="t145" style="top:654.03px;font-size:22px;color:#22343f;letter-spacing:0.368px;-webkit-text-stroke:0.3px #22343f;left:2284.20px;transform:scaleX(1.0554);transform-origin:0 0;">Arbeitsplätze</span>
<span class="t" id="t146" style="top:654.03px;font-size:22px;color:#22313b;-webkit-text-stroke:1.1px #22313b;left:2487.32px;transform:scaleX(1.1038);transform-origin:0 0;">0</span>
<span class="t" id="t147" style="top:692.28px;font-size:22px;color:#22343f;letter-spacing:0.778px;-webkit-text-stroke:0.3px #22343f;left:1600.16px;transform:scaleX(1.0793);transform-origin:0 0;">4000</span>
<span class="t" id="t148" style="top:692.28px;font-size:22px;color:#22343f;-webkit-text-stroke:0.3px #22343f;left:1765.49px;transform:scaleX(1.0894);transform-origin:0 0;">H</span>
<span class="t" id="t149" style="top:692.28px;font-size:22px;color:#22343f;letter-spacing:-0.085px;-webkit-text-stroke:0.3px #22343f;left:1845.87px;transform:scaleX(0.9906);transform-origin:0 0;">UST</span>
<span class="t" id="t150" style="top:692.28px;font-size:22px;color:#22343f;letter-spacing:0.211px;-webkit-text-stroke:0.3px #22343f;right:513.51px;transform:scaleX(1.0201);transform-origin:100% 0;">20 %</span>
<span class="t" id="t151" style="top:692.28px;font-size:22px;color:#22343f;letter-spacing:0.544px;-webkit-text-stroke:0.3px #22343f;right:369.52px;transform:scaleX(1.0662);transform-origin:100% 0;">300,00</span>
<span class="t" id="t152" style="top:692.28px;font-size:22px;color:#22343f;-webkit-text-stroke:0.3px #22343f;left:2203.28px;transform:scaleX(1.0691);transform-origin:0 0;">N</span>
<span class="t" id="t153" style="top:692.28px;font-size:22px;color:#22343f;letter-spacing:0.343px;-webkit-text-stroke:0.3px #22343f;left:2283.29px;transform:scaleX(1.0592);transform-origin:0 0;">Miete Bildschir...</span>
<span class="t" id="t154" style="top:692.28px;font-size:22px;color:#22313b;-webkit-text-stroke:1.1px #22313b;left:2487.32px;transform:scaleX(1.1038);transform-origin:0 0;">0</span>
<div class="b" style="left:408px;top:728px;width:2152px;height:168px;background:#f4f5f7;"></div>
<div class="b" style="left:408px;top:896px;width:2152px;height:2px;background:#d3dade;"></div>
<svg class="b" style="left:420px;top:742px;" width="26" height="26" viewBox="0 0 26 26"><ellipse cx="13.05" cy="13" rx="11.1" ry="11.15" fill="none" stroke="#14355f" stroke-width="2.5"/></svg>
<div class="b" style="left:476.3px;top:744.1px;width:21.6px;height:21.8px;border-radius:50%;background:#dd7a2b;"></div>
<span class="t" id="t155" style="top:746.28px;font-size:22px;color:#22343f;letter-spacing:0.470px;-webkit-text-stroke:0.3px #22343f;left:515.03px;transform:scaleX(1.0623);transform-origin:0 0;">29.08.2020</span>
<span class="t" id="t156" style="top:746.28px;font-size:22px;color:#22343f;letter-spacing:-0.605px;-webkit-text-stroke:0.3px #22343f;left:669.45px;transform:scaleX(0.9545);transform-origin:0 0;">AR</span>
<span class="t" id="t157" style="top:746.28px;font-size:22px;color:#22343f;letter-spacing:0.406px;-webkit-text-stroke:0.3px #22343f;left:763.82px;transform:scaleX(1.0470);transform-origin:0 0;">MusterC GmbH</span>
<span class="t" id="t158" style="top:746.28px;font-size:22px;color:#22343f;letter-spacing:0.773px;-webkit-text-stroke:0.3px #22343f;left:967.50px;transform:scaleX(1.0885);transform-origin:0 0;">200003</span>
<span class="t" id="t159" style="top:746.28px;font-size:22px;color:#22343f;letter-spacing:-0.242px;-webkit-text-stroke:0.3px #22343f;left:1116.74px;transform:scaleX(0.9762);transform-origin:0 0;">1011</span>
<span class="t" id="t160" style="top:746.28px;font-size:22px;color:#22343f;letter-spacing:-0.193px;-webkit-text-stroke:0.3px #22343f;left:1319.44px;transform:scaleX(0.9798);transform-origin:0 0;">EUR</span>
<span class="t" id="t161" style="top:746.28px;font-size:22px;color:#dd7a2b;letter-spacing:0.675px;-webkit-text-stroke:0.75px #dd7a2b;right:973.85px;transform:scaleX(1.0921);transform-origin:100% 0;">5.320,80</span>
<span class="t" id="t162" style="top:746.28px;font-size:22px;color:#22343f;letter-spacing:0.778px;-webkit-text-stroke:0.3px #22343f;left:1600.16px;transform:scaleX(1.0793);transform-origin:0 0;">4000</span>
<span class="t" id="t163" style="top:746.28px;font-size:22px;color:#22343f;-webkit-text-stroke:0.3px #22343f;left:1765.49px;transform:scaleX(1.0894);transform-origin:0 0;">H</span>
<span class="t" id="t164" style="top:746.28px;font-size:22px;color:#22343f;letter-spacing:-0.085px;-webkit-text-stroke:0.3px #22343f;left:1845.87px;transform:scaleX(0.9906);transform-origin:0 0;">UST</span>
<span class="t" id="t165" style="top:746.28px;font-size:22px;color:#22343f;letter-spacing:0.211px;-webkit-text-stroke:0.3px #22343f;right:513.51px;transform:scaleX(1.0201);transform-origin:100% 0;">20 %</span>
<span class="t" id="t166" style="top:746.28px;font-size:22px;color:#22343f;letter-spacing:0.417px;-webkit-text-stroke:0.3px #22343f;right:369.67px;transform:scaleX(1.0552);transform-origin:100% 0;">2.000,00</span>
<span class="t" id="t167" style="top:746.28px;font-size:22px;color:#22343f;-webkit-text-stroke:0.3px #22343f;left:2203.38px;transform:scaleX(1.0085);transform-origin:0 0;">B</span>
<span class="t" id="t168" style="top:746.28px;font-size:22px;color:#22343f;letter-spacing:0.368px;-webkit-text-stroke:0.3px #22343f;left:2284.20px;transform:scaleX(1.0554);transform-origin:0 0;">Arbeitsplätze</span>
<span class="t" id="t169" style="top:746.28px;font-size:22px;color:#43a020;-webkit-text-stroke:0.5px #43a020;left:2485.76px;transform:scaleX(0.9000);transform-origin:0 0;">1</span>
<span class="t" id="t170" style="top:784.28px;font-size:22px;color:#22343f;letter-spacing:0.778px;-webkit-text-stroke:0.3px #22343f;left:1600.16px;transform:scaleX(1.0793);transform-origin:0 0;">4000</span>
<span class="t" id="t171" style="top:784.28px;font-size:22px;color:#22343f;-webkit-text-stroke:0.3px #22343f;left:1765.49px;transform:scaleX(1.0894);transform-origin:0 0;">H</span>
<span class="t" id="t172" style="top:784.28px;font-size:22px;color:#22343f;letter-spacing:-0.085px;-webkit-text-stroke:0.3px #22343f;left:1845.87px;transform:scaleX(0.9906);transform-origin:0 0;">UST</span>
<span class="t" id="t173" style="top:784.28px;font-size:22px;color:#22343f;letter-spacing:-0.051px;-webkit-text-stroke:0.3px #22343f;right:513.79px;transform:scaleX(0.9952);transform-origin:100% 0;">10 %</span>
<span class="t" id="t174" style="top:784.28px;font-size:22px;color:#22343f;letter-spacing:0.313px;-webkit-text-stroke:0.3px #22343f;right:369.80px;transform:scaleX(1.0411);transform-origin:100% 0;">1.500,00</span>
<span class="t" id="t175" style="top:784.28px;font-size:22px;color:#22343f;-webkit-text-stroke:0.3px #22343f;left:2203.38px;transform:scaleX(1.0085);transform-origin:0 0;">B</span>
<span class="t" id="t176" style="top:784.28px;font-size:22px;color:#22343f;letter-spacing:0.343px;-webkit-text-stroke:0.3px #22343f;left:2283.29px;transform:scaleX(1.0592);transform-origin:0 0;">Miete Bildschir...</span>
<span class="t" id="t177" style="top:784.28px;font-size:22px;color:#43a020;-webkit-text-stroke:0.5px #43a020;left:2485.76px;transform:scaleX(0.9000);transform-origin:0 0;">1</span>
<span class="t" id="t178" style="top:824.28px;font-size:22px;color:#22343f;letter-spacing:0.778px;-webkit-text-stroke:0.3px #22343f;left:1600.16px;transform:scaleX(1.0793);transform-origin:0 0;">4800</span>
<span class="t" id="t179" style="top:824.28px;font-size:22px;color:#22343f;-webkit-text-stroke:0.3px #22343f;left:1766.64px;transform:scaleX(0.9000);transform-origin:0 0;">S</span>
<span class="t" id="t180" style="top:824.28px;font-size:22px;color:#22343f;letter-spacing:-0.085px;-webkit-text-stroke:0.3px #22343f;left:1845.87px;transform:scaleX(0.9906);transform-origin:0 0;">UST</span>
<span class="t" id="t181" style="top:824.28px;font-size:22px;color:#22343f;letter-spacing:0.211px;-webkit-text-stroke:0.3px #22343f;right:513.51px;transform:scaleX(1.0201);transform-origin:100% 0;">20 %</span>
<span class="t" id="t182" style="top:824.28px;font-size:22px;color:#22343f;letter-spacing:-0.058px;-webkit-text-stroke:0.3px #22343f;right:370.12px;transform:scaleX(0.9928);transform-origin:100% 0;">1.517,33</span>
<span class="t" id="t183" style="top:824.28px;font-size:22px;color:#22343f;-webkit-text-stroke:0.3px #22343f;left:2203.28px;transform:scaleX(1.0691);transform-origin:0 0;">N</span>
<span class="t" id="t184" style="top:824.28px;font-size:22px;color:#22343f;letter-spacing:0.475px;-webkit-text-stroke:0.3px #22343f;left:2284.02px;transform:scaleX(1.0741);transform-origin:0 0;">Gutschrift</span>
<span class="t" id="t185" style="top:824.28px;font-size:22px;color:#43a020;-webkit-text-stroke:0.5px #43a020;left:2485.76px;transform:scaleX(0.9000);transform-origin:0 0;">1</span>
<span class="t" id="t186" style="top:861.78px;font-size:22px;color:#22343f;letter-spacing:0.778px;-webkit-text-stroke:0.3px #22343f;left:1600.16px;transform:scaleX(1.0793);transform-origin:0 0;">4000</span>
<span class="t" id="t187" style="top:861.78px;font-size:22px;color:#22343f;-webkit-text-stroke:0.3px #22343f;left:1765.49px;transform:scaleX(1.0894);transform-origin:0 0;">H</span>
<span class="t" id="t188" style="top:861.78px;font-size:22px;color:#22343f;letter-spacing:-0.085px;-webkit-text-stroke:0.3px #22343f;left:1845.87px;transform:scaleX(0.9906);transform-origin:0 0;">UST</span>
<span class="t" id="t189" style="top:861.78px;font-size:22px;color:#22343f;letter-spacing:0.211px;-webkit-text-stroke:0.3px #22343f;right:513.51px;transform:scaleX(1.0201);transform-origin:100% 0;">20 %</span>
<span class="t" id="t190" style="top:861.78px;font-size:22px;color:#22343f;letter-spacing:0.386px;-webkit-text-stroke:0.3px #22343f;right:369.50px;transform:scaleX(1.0508);transform-origin:100% 0;">3.034,67</span>
<span class="t" id="t191" style="top:861.78px;font-size:22px;color:#22343f;-webkit-text-stroke:0.3px #22343f;left:2203.28px;transform:scaleX(1.0691);transform-origin:0 0;">N</span>
<span class="t" id="t192" style="top:861.78px;font-size:22px;color:#22343f;letter-spacing:0.475px;-webkit-text-stroke:0.3px #22343f;left:2284.02px;transform:scaleX(1.0741);transform-origin:0 0;">Gutschrift</span>
<span class="t" id="t193" style="top:861.78px;font-size:22px;color:#43a020;-webkit-text-stroke:0.5px #43a020;left:2485.76px;transform:scaleX(0.9000);transform-origin:0 0;">1</span>
<div class="b" style="left:408px;top:898px;width:2152px;height:90px;background:#fafbfb;"></div>
<div class="b" style="left:408px;top:988px;width:2152px;height:2px;background:#d3dade;"></div>
<svg class="b" style="left:420px;top:911px;" width="26" height="26" viewBox="0 0 26 26"><ellipse cx="13.05" cy="13" rx="11.1" ry="11.15" fill="none" stroke="#14355f" stroke-width="2.5"/></svg>
<div class="b" style="left:476.3px;top:913.1px;width:21.6px;height:21.8px;border-radius:50%;background:#dd7a2b;"></div>
<span class="t" id="t194" style="top:916.28px;font-size:22px;color:#22343f;letter-spacing:0.370px;-webkit-text-stroke:0.3px #22343f;left:514.52px;transform:scaleX(1.0486);transform-origin:0 0;">18.08.2020</span>
<span class="t" id="t195" style="top:916.28px;font-size:22px;color:#22343f;letter-spacing:-1.300px;-webkit-text-stroke:0.3px #22343f;left:667.74px;transform:scaleX(0.9500);transform-origin:0 0;">ER</span>
<span class="t" id="t196" style="top:916.28px;font-size:22px;color:#22343f;letter-spacing:0.271px;-webkit-text-stroke:0.3px #22343f;left:763.82px;transform:scaleX(1.0447);transform-origin:0 0;">Billa Aktiengese...</span>
<span class="t" id="t197" style="top:916.28px;font-size:22px;color:#22343f;letter-spacing:0.552px;-webkit-text-stroke:0.3px #22343f;left:967.85px;transform:scaleX(1.0614);transform-origin:0 0;">300001</span>
<span class="t" id="t198" style="top:916.28px;font-size:22px;color:#22343f;letter-spacing:0.460px;-webkit-text-stroke:0.3px #22343f;left:1116.59px;transform:scaleX(1.0657);transform-origin:0 0;">1690-2020081...</span>
<span class="t" id="t199" style="top:916.28px;font-size:22px;color:#22343f;letter-spacing:-0.193px;-webkit-text-stroke:0.3px #22343f;left:1319.44px;transform:scaleX(0.9798);transform-origin:0 0;">EUR</span>
<span class="t" id="t200" style="top:916.28px;font-size:22px;color:#43a020;letter-spacing:0.682px;-webkit-text-stroke:0.75px #43a020;right:973.64px;transform:scaleX(1.0828);transform-origin:100% 0;">44,97</span>
<span class="t" id="t201" style="top:916.28px;font-size:22px;color:#22343f;letter-spacing:0.702px;-webkit-text-stroke:0.3px #22343f;left:1599.52px;transform:scaleX(1.0720);transform-origin:0 0;">7600</span>
<span class="t" id="t202" style="top:916.28px;font-size:22px;color:#22343f;-webkit-text-stroke:0.3px #22343f;left:1766.64px;transform:scaleX(0.9000);transform-origin:0 0;">S</span>
<span class="t" id="t203" style="top:916.28px;font-size:22px;color:#22343f;letter-spacing:-0.424px;-webkit-text-stroke:0.3px #22343f;left:1846.45px;transform:scaleX(0.9554);transform-origin:0 0;">VST</span>
<span class="t" id="t204" style="top:916.28px;font-size:22px;color:#22343f;letter-spacing:0.211px;-webkit-text-stroke:0.3px #22343f;right:513.51px;transform:scaleX(1.0201);transform-origin:100% 0;">20 %</span>
<span class="t" id="t205" style="top:916.28px;font-size:22px;color:#22343f;letter-spacing:0.472px;-webkit-text-stroke:0.3px #22343f;right:369.61px;transform:scaleX(1.0560);transform-origin:100% 0;">30,00</span>
<span class="t" id="t206" style="top:916.28px;font-size:22px;color:#22343f;-webkit-text-stroke:0.3px #22343f;left:2203.38px;transform:scaleX(1.0085);transform-origin:0 0;">B</span>
<span class="t" id="t207" style="top:916.28px;font-size:22px;color:#22343f;letter-spacing:0.329px;-webkit-text-stroke:0.3px #22343f;left:2283.78px;transform:scaleX(1.0386);transform-origin:0 0;">Test</span>
<span class="t" id="t208" style="top:916.28px;font-size:22px;color:#22313b;-webkit-text-stroke:1.1px #22313b;left:2487.32px;transform:scaleX(1.1038);transform-origin:0 0;">0</span>
<span class="t" id="t209" style="top:954.28px;font-size:22px;color:#22343f;letter-spacing:0.702px;-webkit-text-stroke:0.3px #22343f;left:1599.52px;transform:scaleX(1.0720);transform-origin:0 0;">7600</span>
<span class="t" id="t210" style="top:954.28px;font-size:22px;color:#22343f;-webkit-text-stroke:0.3px #22343f;left:1766.64px;transform:scaleX(0.9000);transform-origin:0 0;">S</span>
<span class="t" id="t211" style="top:954.28px;font-size:22px;color:#22343f;letter-spacing:-0.424px;-webkit-text-stroke:0.3px #22343f;left:1846.45px;transform:scaleX(0.9554);transform-origin:0 0;">VST</span>
<span class="t" id="t212" style="top:954.28px;font-size:22px;color:#22343f;letter-spacing:0.211px;-webkit-text-stroke:0.3px #22343f;right:513.51px;transform:scaleX(1.0201);transform-origin:100% 0;">20 %</span>
<span class="t" id="t213" style="top:954.28px;font-size:22px;color:#22343f;letter-spacing:0.126px;-webkit-text-stroke:0.3px #22343f;right:369.82px;transform:scaleX(1.0147);transform-origin:100% 0;">14,97</span>
<span class="t" id="t214" style="top:954.28px;font-size:22px;color:#22343f;-webkit-text-stroke:0.3px #22343f;left:2203.38px;transform:scaleX(1.0085);transform-origin:0 0;">B</span>
<span class="t" id="t215" style="top:954.28px;font-size:22px;color:#22343f;letter-spacing:0.329px;-webkit-text-stroke:0.3px #22343f;left:2283.78px;transform:scaleX(1.0386);transform-origin:0 0;">Test</span>
<span class="t" id="t216" style="top:954.28px;font-size:22px;color:#22313b;-webkit-text-stroke:1.1px #22313b;left:2487.32px;transform:scaleX(1.1038);transform-origin:0 0;">0</span>
<div class="b" style="left:408px;top:990px;width:2152px;height:56px;background:#f4f5f7;"></div>
<div class="b" style="left:408px;top:1046px;width:2152px;height:2px;background:#d3dade;"></div>
<svg class="b" style="left:420px;top:1004px;" width="26" height="26" viewBox="0 0 26 26"><ellipse cx="13.05" cy="13" rx="11.1" ry="11.15" fill="none" stroke="#14355f" stroke-width="2.5"/></svg>
<div class="b" style="left:476.3px;top:1006.1px;width:21.6px;height:21.8px;border-radius:50%;background:#dd7a2b;"></div>
<span class="t" id="t217" style="top:1008.03px;font-size:22px;color:#22343f;letter-spacing:0.294px;-webkit-text-stroke:0.3px #22343f;left:514.54px;transform:scaleX(1.0388);transform-origin:0 0;">11.08.2020</span>
<span class="t" id="t218" style="top:1008.03px;font-size:22px;color:#22343f;letter-spacing:-0.605px;-webkit-text-stroke:0.3px #22343f;left:669.45px;transform:scaleX(0.9545);transform-origin:0 0;">AR</span>
<span class="t" id="t219" style="top:1008.03px;font-size:22px;color:#22343f;letter-spacing:0.289px;-webkit-text-stroke:0.3px #22343f;left:763.82px;transform:scaleX(1.0423);transform-origin:0 0;">Best Pinsel</span>
<span class="t" id="t220" style="top:1008.03px;font-size:22px;color:#22343f;letter-spacing:0.480px;-webkit-text-stroke:0.3px #22343f;left:967.54px;transform:scaleX(1.0532);transform-origin:0 0;">200013</span>
<span class="t" id="t221" style="top:1008.03px;font-size:22px;color:#22343f;letter-spacing:0.637px;-webkit-text-stroke:0.3px #22343f;left:1116.35px;transform:scaleX(1.0809);transform-origin:0 0;">RS-2020-0005</span>
<span class="t" id="t222" style="top:1008.03px;font-size:22px;color:#22343f;letter-spacing:-0.193px;-webkit-text-stroke:0.3px #22343f;left:1319.44px;transform:scaleX(0.9798);transform-origin:0 0;">EUR</span>
<span class="t" id="t223" style="top:1008.03px;font-size:22px;color:#43a020;letter-spacing:0.835px;-webkit-text-stroke:0.75px #43a020;right:973.66px;transform:scaleX(1.1000);transform-origin:100% 0;">6.000,00</span>
<span class="t" id="t224" style="top:1008.03px;font-size:22px;color:#22343f;letter-spacing:0.778px;-webkit-text-stroke:0.3px #22343f;left:1600.16px;transform:scaleX(1.0793);transform-origin:0 0;">4000</span>
<span class="t" id="t225" style="top:1008.03px;font-size:22px;color:#22343f;-webkit-text-stroke:0.3px #22343f;left:1765.49px;transform:scaleX(1.0894);transform-origin:0 0;">H</span>
<span class="t" id="t226" style="top:1008.03px;font-size:22px;color:#22343f;letter-spacing:-0.085px;-webkit-text-stroke:0.3px #22343f;left:1845.87px;transform:scaleX(0.9906);transform-origin:0 0;">UST</span>
<span class="t" id="t227" style="top:1008.03px;font-size:22px;color:#22343f;letter-spacing:0.211px;-webkit-text-stroke:0.3px #22343f;right:513.51px;transform:scaleX(1.0201);transform-origin:100% 0;">20 %</span>
<span class="t" id="t228" style="top:1008.03px;font-size:22px;color:#22343f;letter-spacing:0.468px;-webkit-text-stroke:0.3px #22343f;right:369.61px;transform:scaleX(1.0624);transform-origin:100% 0;">6.000,00</span>
<span class="t" id="t229" style="top:1008.03px;font-size:22px;color:#22343f;-webkit-text-stroke:0.3px #22343f;left:2203.38px;transform:scaleX(1.0085);transform-origin:0 0;">B</span>
<span class="t" id="t230" style="top:1008.03px;font-size:22px;color:#22343f;letter-spacing:0.368px;-webkit-text-stroke:0.3px #22343f;left:2284.20px;transform:scaleX(1.0554);transform-origin:0 0;">Arbeitsplätze</span>
<span class="t" id="t231" style="top:1008.03px;font-size:22px;color:#43a020;-webkit-text-stroke:0.5px #43a020;left:2485.76px;transform:scaleX(0.9000);transform-origin:0 0;">1</span>
<div class="b" style="left:408px;top:1048px;width:2152px;height:56px;background:#fafbfb;"></div>
<div class="b" style="left:408px;top:1104px;width:2152px;height:2px;background:#d3dade;"></div>
<svg class="b" style="left:420px;top:1060px;" width="26" height="26" viewBox="0 0 26 26"><ellipse cx="13.05" cy="13" rx="11.1" ry="11.15" fill="none" stroke="#14355f" stroke-width="2.5"/></svg>
<div class="b" style="left:476.3px;top:1062.1px;width:21.6px;height:21.8px;border-radius:50%;background:#dd7a2b;"></div>
<span class="t" id="t232" style="top:1064.28px;font-size:22px;color:#22343f;letter-spacing:0.458px;-webkit-text-stroke:0.3px #22343f;left:515.35px;transform:scaleX(1.0604);transform-origin:0 0;">09.08.2020</span>
<span class="t" id="t233" style="top:1064.28px;font-size:22px;color:#22343f;letter-spacing:-1.300px;-webkit-text-stroke:0.3px #22343f;left:667.74px;transform:scaleX(0.9500);transform-origin:0 0;">ER</span>
<span class="t" id="t234" style="top:1064.28px;font-size:22px;color:#22343f;letter-spacing:0.271px;-webkit-text-stroke:0.3px #22343f;left:763.82px;transform:scaleX(1.0447);transform-origin:0 0;">Billa Aktiengese...</span>
<span class="t" id="t235" style="top:1064.28px;font-size:22px;color:#22343f;letter-spacing:0.555px;-webkit-text-stroke:0.3px #22343f;left:967.54px;transform:scaleX(1.0561);transform-origin:0 0;">2700</span>
<span class="t" id="t236" style="top:1064.28px;font-size:22px;color:#22343f;letter-spacing:0.673px;-webkit-text-stroke:0.3px #22343f;left:1117.12px;transform:scaleX(1.0690);transform-origin:0 0;">7858</span>
<span class="t" id="t237" style="top:1064.28px;font-size:22px;color:#22343f;letter-spacing:-0.193px;-webkit-text-stroke:0.3px #22343f;left:1319.44px;transform:scaleX(0.9798);transform-origin:0 0;">EUR</span>
<span class="t" id="t238" style="top:1064.28px;font-size:22px;color:#43a020;letter-spacing:0.445px;-webkit-text-stroke:0.75px #43a020;right:973.94px;transform:scaleX(1.0525);transform-origin:100% 0;">41,79</span>
<span class="t" id="t239" style="top:1064.28px;font-size:22px;color:#22343f;letter-spacing:0.702px;-webkit-text-stroke:0.3px #22343f;left:1599.52px;transform:scaleX(1.0720);transform-origin:0 0;">7600</span>
<span class="t" id="t240" style="top:1064.28px;font-size:22px;color:#22343f;-webkit-text-stroke:0.3px #22343f;left:1766.64px;transform:scaleX(0.9000);transform-origin:0 0;">S</span>
<span class="t" id="t241" style="top:1064.28px;font-size:22px;color:#22343f;letter-spacing:-0.424px;-webkit-text-stroke:0.3px #22343f;left:1846.45px;transform:scaleX(0.9554);transform-origin:0 0;">VST</span>
<span class="t" id="t242" style="top:1064.28px;font-size:22px;color:#22343f;letter-spacing:-0.051px;-webkit-text-stroke:0.3px #22343f;right:513.79px;transform:scaleX(0.9952);transform-origin:100% 0;">10 %</span>
<span class="t" id="t243" style="top:1064.28px;font-size:22px;color:#22343f;letter-spacing:0.117px;-webkit-text-stroke:0.3px #22343f;right:369.83px;transform:scaleX(1.0132);transform-origin:100% 0;">41,79</span>
<span class="t" id="t244" style="top:1064.28px;font-size:22px;color:#22343f;-webkit-text-stroke:0.3px #22343f;left:2203.38px;transform:scaleX(1.0085);transform-origin:0 0;">B</span>
<span class="t" id="t245" style="top:1064.28px;font-size:22px;color:#22343f;letter-spacing:0.427px;-webkit-text-stroke:0.3px #22343f;left:2284.20px;transform:scaleX(1.0584);transform-origin:0 0;">Verpflegung</span>
<span class="t" id="t246" style="top:1064.28px;font-size:22px;color:#22313b;-webkit-text-stroke:1.1px #22313b;left:2487.32px;transform:scaleX(1.1038);transform-origin:0 0;">0</span>
<div class="b" style="left:408px;top:1106px;width:2152px;height:54px;background:#f4f5f7;"></div>
<div class="b" style="left:408px;top:1160px;width:2152px;height:2px;background:#d3dade;"></div>
<svg class="b" style="left:420px;top:1118px;" width="26" height="26" viewBox="0 0 26 26"><ellipse cx="13.05" cy="13" rx="11.1" ry="11.15" fill="none" stroke="#14355f" stroke-width="2.5"/></svg>
<div class="b" style="left:476.3px;top:1120.1px;width:21.6px;height:21.8px;border-radius:50%;background:#43a020;"></div>
<span class="t" id="t247" style="top:1121.78px;font-size:22px;color:#22343f;letter-spacing:0.338px;-webkit-text-stroke:0.3px #22343f;left:515.36px;transform:scaleX(1.0439);transform-origin:0 0;">07.08.2020</span>
<span class="t" id="t248" style="top:1121.78px;font-size:22px;color:#22343f;letter-spacing:-1.300px;-webkit-text-stroke:0.3px #22343f;left:667.74px;transform:scaleX(0.9500);transform-origin:0 0;">ER</span>
<span class="t" id="t249" style="top:1121.78px;font-size:22px;color:#22343f;letter-spacing:0.196px;-webkit-text-stroke:0.3px #22343f;left:763.85px;transform:scaleX(1.0283);transform-origin:0 0;">Meine Firma G...</span>
<span class="t" id="t250" style="top:1121.78px;font-size:22px;color:#22343f;letter-spacing:0.753px;-webkit-text-stroke:0.3px #22343f;left:967.83px;transform:scaleX(1.0856);transform-origin:0 0;">300003</span>
<span class="t" id="t251" style="top:1121.78px;font-size:22px;color:#22343f;letter-spacing:0.345px;-webkit-text-stroke:0.3px #22343f;left:1116.43px;transform:scaleX(1.0390);transform-origin:0 0;">RE012345678</span>
<span class="t" id="t252" style="top:1121.78px;font-size:22px;color:#22343f;letter-spacing:-0.193px;-webkit-text-stroke:0.3px #22343f;left:1319.44px;transform:scaleX(0.9798);transform-origin:0 0;">EUR</span>
<span class="t" id="t253" style="top:1121.78px;font-size:22px;color:#43a020;letter-spacing:0.654px;-webkit-text-stroke:0.75px #43a020;right:973.88px;transform:scaleX(1.0818);transform-origin:100% 0;">156,00</span>
<span class="t" id="t254" style="top:1121.78px;font-size:22px;color:#22343f;letter-spacing:0.614px;-webkit-text-stroke:0.3px #22343f;left:1599.53px;transform:scaleX(1.0625);transform-origin:0 0;">7750</span>
<span class="t" id="t255" style="top:1121.78px;font-size:22px;color:#22343f;-webkit-text-stroke:0.3px #22343f;left:1766.64px;transform:scaleX(0.9000);transform-origin:0 0;">S</span>
<span class="t" id="t256" style="top:1121.78px;font-size:22px;color:#22343f;letter-spacing:-0.424px;-webkit-text-stroke:0.3px #22343f;left:1846.45px;transform:scaleX(0.9554);transform-origin:0 0;">VST</span>
<span class="t" id="t257" style="top:1121.78px;font-size:22px;color:#22343f;letter-spacing:0.211px;-webkit-text-stroke:0.3px #22343f;right:513.51px;transform:scaleX(1.0201);transform-origin:100% 0;">20 %</span>
<span class="t" id="t258" style="top:1121.78px;font-size:22px;color:#22343f;letter-spacing:0.334px;-webkit-text-stroke:0.3px #22343f;right:369.78px;transform:scaleX(1.0402);transform-origin:100% 0;">156,00</span>
<span class="t" id="t259" style="top:1121.78px;font-size:22px;color:#22343f;-webkit-text-stroke:0.3px #22343f;left:2203.38px;transform:scaleX(1.0085);transform-origin:0 0;">B</span>
<span class="t" id="t260" style="top:1121.78px;font-size:22px;color:#22343f;letter-spacing:0.420px;-webkit-text-stroke:0.3px #22343f;left:2283.30px;transform:scaleX(1.0539);transform-origin:0 0;">Beratung</span>
<div class="b" style="left:408px;top:1162px;width:2152px;height:48px;background:#fafbfb;"></div>
<div class="b" style="left:408px;top:1210px;width:2152px;height:2px;background:#d3dade;"></div>
<svg class="b" style="left:420px;top:1175px;" width="26" height="26" viewBox="0 0 26 26"><ellipse cx="13.05" cy="13" rx="11.1" ry="11.15" fill="none" stroke="#14355f" stroke-width="2.5"/></svg>
<div class="b" style="left:476px;top:1190.5px;width:22px;height:2px;background:#a4aeb6;"></div>
<span class="t" id="t261" style="top:1179.78px;font-size:22px;color:#22343f;letter-spacing:0.338px;-webkit-text-stroke:0.3px #22343f;left:515.36px;transform:scaleX(1.0439);transform-origin:0 0;">07.08.2020</span>
<span class="t" id="t262" style="top:1179.78px;font-size:22px;color:#22343f;letter-spacing:-1.300px;-webkit-text-stroke:0.3px #22343f;left:667.74px;transform:scaleX(0.9500);transform-origin:0 0;">ER</span>
<span class="t" id="t263" style="top:1179.78px;font-size:22px;color:#22343f;letter-spacing:0.392px;-webkit-text-stroke:0.3px #22343f;left:763.81px;transform:scaleX(1.0476);transform-origin:0 0;">Muster D GmbH</span>
<span class="t" id="t264" style="top:1179.78px;font-size:22px;color:#22343f;letter-spacing:0.767px;-webkit-text-stroke:0.3px #22343f;left:967.83px;transform:scaleX(1.0869);transform-origin:0 0;">300024</span>
<span class="t" id="t265" style="top:1179.78px;font-size:22px;color:#22343f;letter-spacing:0.490px;-webkit-text-stroke:0.3px #22343f;left:1116.62px;transform:scaleX(1.0525);transform-origin:0 0;">10004</span>
<span class="t" id="t266" style="top:1179.78px;font-size:22px;color:#22343f;letter-spacing:-0.193px;-webkit-text-stroke:0.3px #22343f;left:1319.44px;transform:scaleX(0.9798);transform-origin:0 0;">EUR</span>
<span class="t" id="t267" style="top:1179.78px;font-size:22px;color:#43a020;letter-spacing:0.616px;-webkit-text-stroke:0.75px #43a020;right:973.92px;transform:scaleX(1.0844);transform-origin:100% 0;">1.956,00</span>
<span class="t" id="t268" style="top:1179.78px;font-size:22px;color:#22343f;letter-spacing:0.614px;-webkit-text-stroke:0.3px #22343f;left:1599.53px;transform:scaleX(1.0625);transform-origin:0 0;">7750</span>
<span class="t" id="t269" style="top:1179.78px;font-size:22px;color:#22343f;-webkit-text-stroke:0.3px #22343f;left:1766.64px;transform:scaleX(0.9000);transform-origin:0 0;">S</span>
<span class="t" id="t270" style="top:1179.78px;font-size:22px;color:#22343f;letter-spacing:-0.424px;-webkit-text-stroke:0.3px #22343f;left:1846.45px;transform:scaleX(0.9554);transform-origin:0 0;">VST</span>
<span class="t" id="t271" style="top:1179.78px;font-size:22px;color:#22343f;letter-spacing:0.211px;-webkit-text-stroke:0.3px #22343f;right:513.51px;transform:scaleX(1.0201);transform-origin:100% 0;">20 %</span>
<span class="t" id="t272" style="top:1179.78px;font-size:22px;color:#22343f;letter-spacing:0.365px;-webkit-text-stroke:0.3px #22343f;right:369.74px;transform:scaleX(1.0483);transform-origin:100% 0;">1.956,00</span>
<span class="t" id="t273" style="top:1179.78px;font-size:22px;color:#22343f;-webkit-text-stroke:0.3px #22343f;left:2203.38px;transform:scaleX(1.0085);transform-origin:0 0;">B</span>
<span class="t" id="t274" style="top:1179.78px;font-size:22px;color:#22343f;letter-spacing:0.420px;-webkit-text-stroke:0.3px #22343f;left:2283.30px;transform:scaleX(1.0539);transform-origin:0 0;">Beratung</span>
<span class="t" id="t275" style="top:1179.78px;font-size:22px;color:#22313b;-webkit-text-stroke:1.1px #22313b;left:2487.32px;transform:scaleX(1.1038);transform-origin:0 0;">0</span>
<div class="b" style="left:408px;top:1095px;width:2152px;height:107px;background:linear-gradient(to bottom,rgba(0,0,0,0),rgba(0,0,0,.05));"></div>
<div class="b" style="left:0px;top:1198px;width:2560px;height:4px;background:linear-gradient(to bottom,rgba(0,0,0,0),rgba(0,0,0,.12));"></div>
<div class="b" style="left:2436px;top:1078px;width:94px;height:94px;background:#ef403b;border-radius:50%;box-shadow:0 4px 28px rgba(60,70,80,.28);"></div>
<svg class="b" style="left:2436px;top:1078px;" width="94" height="94" viewBox="0 0 94 94"><rect x="19" y="28.3" width="57.3" height="36.7" rx="14" fill="#fdfdfd"/><path d="M30 63.5H49L40.2 75.2Z" fill="#fdfdfd"/><circle cx="33.8" cy="47.2" r="4.2" fill="#ef403b"/><circle cx="47.6" cy="47.2" r="4.2" fill="#ef403b"/><circle cx="61.5" cy="47.2" r="4.2" fill="#ef403b"/></svg>
<svg class="b" style="left:0px;top:1190px;" width="12" height="12" viewBox="0 0 12 12"><path d="M0 0V12H12A12 12 0 0 1 0 0Z" fill="#000"/></svg>
<svg class="b" style="left:2548px;top:1190px;" width="12" height="12" viewBox="0 0 12 12"><path d="M12 0V12H0A12 12 0 0 0 12 0Z" fill="#000"/></svg>
</div></body></html>
